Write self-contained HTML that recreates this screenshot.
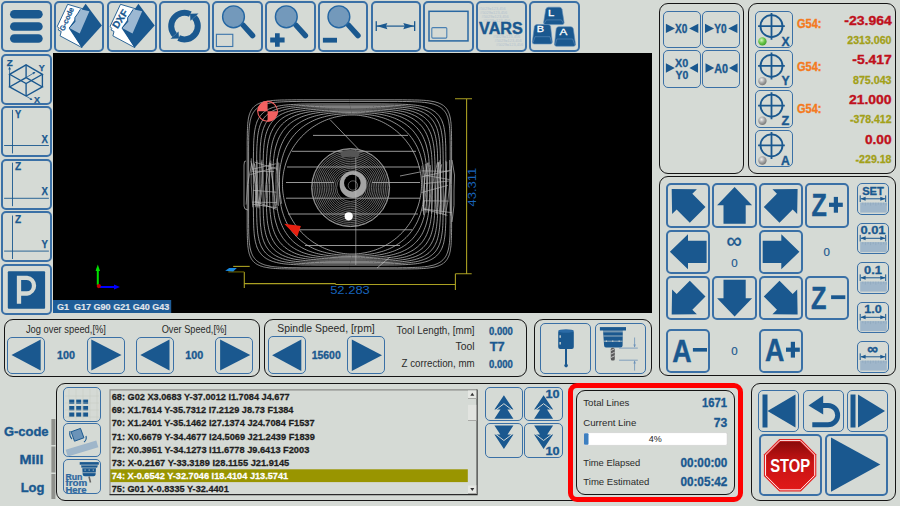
<!DOCTYPE html>
<html><head><meta charset="utf-8">
<style>
html,body{margin:0;padding:0;}
body{width:900px;height:506px;overflow:hidden;background:#d5dad5;position:relative;font-family:"Liberation Sans",sans-serif;}
.a{position:absolute;box-sizing:border-box;}
.b{position:absolute;box-sizing:border-box;border:2px solid #3a70a6;border-radius:5px;}
.p{position:absolute;box-sizing:border-box;border:1.7px solid #151515;border-radius:9px;}
.t{position:absolute;white-space:nowrap;line-height:1;}
svg{position:absolute;overflow:visible;}
</style></head><body>
<!-- top toolbar -->
<div class="b" style="left:0.9px;top:0.9px;width:50.7px;height:50.7px"></div>
<div class="b" style="left:53.7px;top:0.9px;width:50.7px;height:50.7px"></div>
<div class="b" style="left:106.5px;top:0.9px;width:50.7px;height:50.7px"></div>
<div class="b" style="left:159.3px;top:0.9px;width:50.7px;height:50.7px"></div>
<div class="b" style="left:212.1px;top:0.9px;width:50.7px;height:50.7px"></div>
<div class="b" style="left:264.9px;top:0.9px;width:50.7px;height:50.7px"></div>
<div class="b" style="left:317.7px;top:0.9px;width:50.7px;height:50.7px"></div>
<div class="b" style="left:370.5px;top:0.9px;width:50.7px;height:50.7px"></div>
<div class="b" style="left:423.3px;top:0.9px;width:50.7px;height:50.7px"></div>
<div class="b" style="left:476.1px;top:0.9px;width:50.7px;height:50.7px"></div>
<div class="b" style="left:528.9px;top:0.9px;width:50.7px;height:50.7px"></div>
<!-- left column -->
<div class="b" style="left:0.9px;top:53.5px;width:50.7px;height:51.2px"></div>
<div class="b" style="left:0.9px;top:106px;width:50.7px;height:51.2px"></div>
<div class="b" style="left:0.9px;top:158.5px;width:50.7px;height:51.2px"></div>
<div class="b" style="left:0.9px;top:211px;width:50.7px;height:51.2px"></div>
<div class="b" style="left:0.9px;top:263.6px;width:50.7px;height:51.2px"></div>
<!-- canvas -->
<div class="a" style="left:53px;top:53px;width:599.2px;height:259.8px;background:#000;overflow:hidden" id="cv"></div>

<!-- top right panels -->
<div class="p" style="left:658.7px;top:3.3px;width:85.6px;height:170.6px"></div>
<div class="p" style="left:748.2px;top:3.3px;width:147.8px;height:170.6px"></div>
<div class="b" style="left:663.2px;top:10.8px;width:37.5px;height:37.5px;border-width:1.5px"></div>
<div class="b" style="left:702.3px;top:10.8px;width:37.5px;height:37.5px;border-width:1.5px"></div>
<div class="b" style="left:663.2px;top:50.1px;width:37.5px;height:37.5px;border-width:1.5px"></div>
<div class="b" style="left:702.3px;top:50.1px;width:37.5px;height:37.5px;border-width:1.5px"></div>
<div class="b" style="left:755.1px;top:10.7px;width:37.6px;height:37.7px;border-width:1.5px"></div>
<div class="b" style="left:755.1px;top:50.4px;width:37.6px;height:37.7px;border-width:1.5px"></div>
<div class="b" style="left:755.1px;top:90.1px;width:37.6px;height:37.7px;border-width:1.5px"></div>
<div class="b" style="left:755.1px;top:129.8px;width:37.6px;height:37.7px;border-width:1.5px"></div>

<!-- jog panel -->
<div class="p" style="left:659px;top:176.3px;width:236.9px;height:200.2px"></div>
<div class="b" style="left:665.9px;top:183.3px;width:44.5px;height:44.3px"></div>
<div class="b" style="left:712.2px;top:183.3px;width:44.5px;height:44.3px"></div>
<div class="b" style="left:758.5px;top:183.3px;width:44.5px;height:44.3px"></div>
<div class="b" style="left:804.8px;top:183.3px;width:44.5px;height:44.3px"></div>
<div class="b" style="left:665.9px;top:229.8px;width:44.5px;height:44.3px"></div>
<div class="b" style="left:758.5px;top:229.8px;width:44.5px;height:44.3px"></div>
<div class="b" style="left:665.9px;top:276.2px;width:44.5px;height:44.3px"></div>
<div class="b" style="left:712.2px;top:276.2px;width:44.5px;height:44.3px"></div>
<div class="b" style="left:758.5px;top:276.2px;width:44.5px;height:44.3px"></div>
<div class="b" style="left:804.8px;top:276.2px;width:44.5px;height:44.3px"></div>
<div class="b" style="left:665.9px;top:328.6px;width:44.5px;height:44.3px"></div>
<div class="b" style="left:758.5px;top:328.6px;width:44.5px;height:44.3px"></div>
<div class="b" style="left:857.2px;top:183.3px;width:31.5px;height:31.3px;border-width:1.5px"></div>
<div class="b" style="left:857.2px;top:222.8px;width:31.5px;height:31.3px;border-width:1.5px"></div>
<div class="b" style="left:857.2px;top:262.3px;width:31.5px;height:31.3px;border-width:1.5px"></div>
<div class="b" style="left:857.2px;top:301.8px;width:31.5px;height:31.3px;border-width:1.5px"></div>
<div class="b" style="left:857.2px;top:341.3px;width:31.5px;height:31.3px;border-width:1.5px"></div>

<!-- bottom mid panels -->
<div class="p" style="left:3.5px;top:318.9px;width:256px;height:58.5px"></div>
<div class="b" style="left:7.2px;top:336.6px;width:38px;height:37px;border-width:1.5px"></div>
<div class="b" style="left:86.7px;top:336.6px;width:38px;height:37px;border-width:1.5px"></div>
<div class="b" style="left:136px;top:336.6px;width:38px;height:37px;border-width:1.5px"></div>
<div class="b" style="left:215.3px;top:336.6px;width:38px;height:37px;border-width:1.5px"></div>
<div class="p" style="left:264.2px;top:318.9px;width:262.4px;height:58.5px"></div>
<div class="b" style="left:267.8px;top:336.4px;width:38px;height:37.6px;border-width:1.5px"></div>
<div class="b" style="left:346.7px;top:336.4px;width:38px;height:37.6px;border-width:1.5px"></div>
<div class="p" style="left:534.2px;top:318.9px;width:118px;height:58.4px"></div>
<div class="b" style="left:540px;top:323.4px;width:50.6px;height:50.6px;border-width:1.5px"></div>
<div class="b" style="left:595px;top:323.4px;width:50.9px;height:50.6px;border-width:1.5px"></div>

<!-- bottom row -->
<div class="p" style="left:56.4px;top:382.6px;width:684px;height:118.8px"></div>
<div class="b" style="left:63.4px;top:387.2px;width:37.5px;height:34.4px;border-width:1.5px"></div>
<div class="b" style="left:63.4px;top:423.4px;width:37.5px;height:34px;border-width:1.5px"></div>
<div class="b" style="left:63.4px;top:459px;width:37.5px;height:35px;border-width:1.5px"></div>
<div class="b" style="left:485px;top:387.4px;width:37.8px;height:33.6px;border-width:1.5px"></div>
<div class="b" style="left:524.3px;top:387.4px;width:38.5px;height:33.6px;border-width:1.5px"></div>
<div class="b" style="left:485px;top:423px;width:37.8px;height:34.7px;border-width:1.5px"></div>
<div class="b" style="left:524.3px;top:423px;width:38.5px;height:34.7px;border-width:1.5px"></div>

<div class="p" style="left:576.2px;top:389.9px;width:158.9px;height:105px;border-width:1.8px"></div>
<div class="a" style="left:568.1px;top:383px;width:174.6px;height:119.4px;border:5px solid #ff0000;border-radius:9px"></div>

<div class="p" style="left:751.3px;top:383px;width:144.7px;height:118.1px"></div>
<div class="b" style="left:758.1px;top:390.1px;width:41.3px;height:41.5px;border-width:1.5px"></div>
<div class="b" style="left:803.2px;top:390.1px;width:40.4px;height:41.5px;border-width:1.5px"></div>
<div class="b" style="left:846.6px;top:390.1px;width:41.3px;height:41.5px;border-width:1.5px"></div>
<div class="b" style="left:758.9px;top:434.1px;width:62.7px;height:62.2px"></div>
<div class="b" style="left:825.4px;top:434.1px;width:62.5px;height:62.2px"></div>


<svg width="900" height="506" style="left:0;top:0" viewBox="0 0 900 506" font-family="Liberation Sans, sans-serif">
<defs><clipPath id="cvc"><rect x="53" y="53" width="599.5" height="260"/></clipPath>
<path id="arr" d="M0,-18.4 L17.5,-0.3 L11.1,-0.3 L11.1,18.3 L-11.1,18.3 L-11.1,-0.3 L-17.5,-0.3Z"/>
<radialGradient id="led" cx="0.4" cy="0.35" r="0.7"><stop offset="0" stop-color="#d8f5c0"/><stop offset="0.5" stop-color="#6cc84a"/><stop offset="1" stop-color="#3a9a2a"/></radialGradient>
<radialGradient id="ledg" cx="0.4" cy="0.35" r="0.7"><stop offset="0" stop-color="#f0f0f0"/><stop offset="0.5" stop-color="#a8a8a8"/><stop offset="1" stop-color="#707070"/></radialGradient>
<linearGradient id="stopg" x1="0" y1="0" x2="0" y2="1"><stop offset="0" stop-color="#8a0a0a"/><stop offset="0.45" stop-color="#c81414"/><stop offset="1" stop-color="#e01818"/></linearGradient>
</defs>
<g clip-path="url(#cvc)"><!-- CANVAS START -->
<g fill="none" stroke="#bdbdbd" stroke-width="0.75"><path d="M451.6,184.4 L451.6,222.1 L451.6,228.3 L451.5,232.5 L451.5,235.6 L451.4,238.2 L451.3,240.4 L451.2,242.4 L451.1,244.1 L451.0,245.6 L450.8,247.1 L450.6,248.4 L450.5,249.6 L450.3,250.7 L450.1,251.7 L449.8,252.7 L449.6,253.7 L449.3,254.6 L449.0,255.4 L448.7,256.2 L448.4,256.9 L448.0,257.6 L447.7,258.3 L447.3,259.0 L446.9,259.6 L446.5,260.2 L446.0,260.7 L445.6,261.3 L445.1,261.8 L444.6,262.3 L444.0,262.7 L443.5,263.2 L442.9,263.6 L442.3,264.0 L441.6,264.4 L440.9,264.8 L440.2,265.1 L439.5,265.4 L438.7,265.8 L437.9,266.1 L437.0,266.3 L436.1,266.6 L435.2,266.9 L434.1,267.1 L433.1,267.3 L432.0,267.5 L430.8,267.7 L429.5,267.9 L428.1,268.1 L426.7,268.2 L425.1,268.4 L423.4,268.5 L421.5,268.6 L419.4,268.7 L417.1,268.8 L414.4,268.8 L411.3,268.9 L407.5,268.9 L402.5,269.0 L394.9,269.0 L349.4,269.0 L303.9,269.0 L296.3,269.0 L291.3,268.9 L287.5,268.9 L284.4,268.8 L281.7,268.8 L279.4,268.7 L277.3,268.6 L275.4,268.5 L273.7,268.4 L272.1,268.2 L270.7,268.1 L269.3,267.9 L268.0,267.7 L266.8,267.5 L265.7,267.3 L264.7,267.1 L263.6,266.9 L262.7,266.6 L261.8,266.3 L260.9,266.1 L260.1,265.8 L259.3,265.4 L258.6,265.1 L257.9,264.8 L257.2,264.4 L256.5,264.0 L255.9,263.6 L255.3,263.2 L254.8,262.7 L254.2,262.3 L253.7,261.8 L253.2,261.3 L252.8,260.7 L252.3,260.2 L251.9,259.6 L251.5,259.0 L251.1,258.3 L250.8,257.6 L250.4,256.9 L250.1,256.2 L249.8,255.4 L249.5,254.6 L249.2,253.7 L249.0,252.7 L248.7,251.7 L248.5,250.7 L248.3,249.6 L248.2,248.4 L248.0,247.1 L247.8,245.6 L247.7,244.1 L247.6,242.4 L247.5,240.4 L247.4,238.2 L247.3,235.6 L247.3,232.5 L247.2,228.3 L247.2,222.1 L247.2,184.4 L247.2,146.7 L247.2,140.5 L247.3,136.3 L247.3,133.2 L247.4,130.6 L247.5,128.4 L247.6,126.4 L247.7,124.7 L247.8,123.2 L248.0,121.7 L248.2,120.4 L248.3,119.2 L248.5,118.1 L248.7,117.1 L249.0,116.1 L249.2,115.1 L249.5,114.2 L249.8,113.4 L250.1,112.6 L250.4,111.9 L250.8,111.2 L251.1,110.5 L251.5,109.8 L251.9,109.2 L252.3,108.6 L252.8,108.1 L253.2,107.5 L253.7,107.0 L254.2,106.5 L254.8,106.1 L255.3,105.6 L255.9,105.2 L256.5,104.8 L257.2,104.4 L257.9,104.0 L258.6,103.7 L259.3,103.4 L260.1,103.0 L260.9,102.7 L261.8,102.5 L262.7,102.2 L263.6,101.9 L264.7,101.7 L265.7,101.5 L266.8,101.3 L268.0,101.1 L269.3,100.9 L270.7,100.7 L272.1,100.6 L273.7,100.4 L275.4,100.3 L277.3,100.2 L279.4,100.1 L281.7,100.0 L284.4,100.0 L287.5,99.9 L291.3,99.9 L296.3,99.8 L303.9,99.8 L349.4,99.8 L394.9,99.8 L402.5,99.8 L407.5,99.9 L411.3,99.9 L414.4,100.0 L417.1,100.0 L419.4,100.1 L421.5,100.2 L423.4,100.3 L425.1,100.4 L426.7,100.6 L428.1,100.7 L429.5,100.9 L430.8,101.1 L432.0,101.3 L433.1,101.5 L434.1,101.7 L435.2,101.9 L436.1,102.2 L437.0,102.5 L437.9,102.7 L438.7,103.0 L439.5,103.4 L440.2,103.7 L440.9,104.0 L441.6,104.4 L442.3,104.8 L442.9,105.2 L443.5,105.6 L444.0,106.1 L444.6,106.5 L445.1,107.0 L445.6,107.5 L446.0,108.1 L446.5,108.6 L446.9,109.2 L447.3,109.8 L447.7,110.5 L448.0,111.2 L448.4,111.9 L448.7,112.6 L449.0,113.4 L449.3,114.2 L449.6,115.1 L449.8,116.1 L450.1,117.1 L450.3,118.1 L450.5,119.2 L450.6,120.4 L450.8,121.7 L451.0,123.2 L451.1,124.7 L451.2,126.4 L451.3,128.4 L451.4,130.6 L451.5,133.2 L451.5,136.3 L451.6,140.5 L451.6,146.7Z"/><path d="M450.2,184.6 L450.2,218.1 L450.2,224.4 L450.1,228.6 L450.1,231.9 L450.0,234.6 L449.9,236.9 L449.8,239.0 L449.6,240.8 L449.5,242.4 L449.3,243.9 L449.1,245.3 L448.9,246.6 L448.7,247.8 L448.5,249.0 L448.2,250.0 L447.9,251.0 L447.7,252.0 L447.3,252.9 L447.0,253.7 L446.6,254.6 L446.3,255.3 L445.9,256.1 L445.4,256.8 L445.0,257.4 L444.5,258.1 L444.0,258.7 L443.5,259.3 L443.0,259.8 L442.4,260.4 L441.8,260.9 L441.2,261.4 L440.6,261.8 L439.9,262.3 L439.2,262.7 L438.4,263.1 L437.7,263.5 L436.8,263.9 L436.0,264.2 L435.1,264.5 L434.2,264.9 L433.2,265.2 L432.1,265.4 L431.1,265.7 L429.9,265.9 L428.7,266.2 L427.4,266.4 L426.0,266.6 L424.6,266.8 L423.0,266.9 L421.3,267.1 L419.5,267.2 L417.5,267.3 L415.3,267.4 L412.8,267.5 L410.0,267.6 L406.7,267.7 L402.7,267.7 L397.6,267.8 L389.9,267.8 L349.4,267.8 L308.9,267.8 L301.2,267.8 L296.1,267.7 L292.1,267.7 L288.8,267.6 L286.0,267.5 L283.5,267.4 L281.3,267.3 L279.3,267.2 L277.5,267.1 L275.8,266.9 L274.2,266.8 L272.8,266.6 L271.4,266.4 L270.1,266.2 L268.9,265.9 L267.7,265.7 L266.7,265.4 L265.6,265.2 L264.6,264.9 L263.7,264.5 L262.8,264.2 L262.0,263.9 L261.1,263.5 L260.4,263.1 L259.6,262.7 L258.9,262.3 L258.2,261.8 L257.6,261.4 L257.0,260.9 L256.4,260.4 L255.8,259.8 L255.3,259.3 L254.8,258.7 L254.3,258.1 L253.8,257.4 L253.4,256.8 L252.9,256.1 L252.5,255.3 L252.2,254.6 L251.8,253.7 L251.5,252.9 L251.1,252.0 L250.9,251.0 L250.6,250.0 L250.3,249.0 L250.1,247.8 L249.9,246.6 L249.7,245.3 L249.5,243.9 L249.3,242.4 L249.2,240.8 L249.0,239.0 L248.9,236.9 L248.8,234.6 L248.7,231.9 L248.7,228.6 L248.6,224.4 L248.6,218.1 L248.6,184.6 L248.6,151.1 L248.6,144.8 L248.7,140.6 L248.7,137.3 L248.8,134.6 L248.9,132.3 L249.0,130.2 L249.2,128.4 L249.3,126.8 L249.5,125.3 L249.7,123.9 L249.9,122.6 L250.1,121.4 L250.3,120.2 L250.6,119.2 L250.9,118.2 L251.1,117.2 L251.5,116.3 L251.8,115.5 L252.2,114.6 L252.5,113.9 L252.9,113.1 L253.4,112.4 L253.8,111.8 L254.3,111.1 L254.8,110.5 L255.3,109.9 L255.8,109.4 L256.4,108.8 L257.0,108.3 L257.6,107.8 L258.2,107.4 L258.9,106.9 L259.6,106.5 L260.4,106.1 L261.1,105.7 L262.0,105.3 L262.8,105.0 L263.7,104.7 L264.6,104.3 L265.6,104.0 L266.7,103.8 L267.7,103.5 L268.9,103.3 L270.1,103.0 L271.4,102.8 L272.8,102.6 L274.2,102.4 L275.8,102.3 L277.5,102.1 L279.3,102.0 L281.3,101.9 L283.5,101.8 L286.0,101.7 L288.8,101.6 L292.1,101.5 L296.1,101.5 L301.2,101.4 L308.9,101.4 L349.4,101.4 L389.9,101.4 L397.6,101.4 L402.7,101.5 L406.7,101.5 L410.0,101.6 L412.8,101.7 L415.3,101.8 L417.5,101.9 L419.5,102.0 L421.3,102.1 L423.0,102.3 L424.6,102.4 L426.0,102.6 L427.4,102.8 L428.7,103.0 L429.9,103.3 L431.1,103.5 L432.1,103.8 L433.2,104.0 L434.2,104.3 L435.1,104.7 L436.0,105.0 L436.8,105.3 L437.7,105.7 L438.4,106.1 L439.2,106.5 L439.9,106.9 L440.6,107.4 L441.2,107.8 L441.8,108.3 L442.4,108.8 L443.0,109.4 L443.5,109.9 L444.0,110.5 L444.5,111.1 L445.0,111.8 L445.4,112.4 L445.9,113.1 L446.3,113.9 L446.6,114.6 L447.0,115.5 L447.3,116.3 L447.7,117.2 L447.9,118.2 L448.2,119.2 L448.5,120.2 L448.7,121.4 L448.9,122.6 L449.1,123.9 L449.3,125.3 L449.5,126.8 L449.6,128.4 L449.8,130.2 L449.9,132.3 L450.0,134.6 L450.1,137.3 L450.1,140.6 L450.2,144.8 L450.2,151.1Z"/><path d="M445.9,184.5 L445.9,210.9 L445.8,217.5 L445.8,222.1 L445.6,225.8 L445.5,228.8 L445.3,231.5 L445.1,233.8 L444.9,236.0 L444.6,237.9 L444.3,239.7 L444.0,241.3 L443.7,242.9 L443.3,244.3 L442.8,245.7 L442.4,247.0 L441.9,248.2 L441.4,249.3 L440.8,250.4 L440.2,251.4 L439.5,252.4 L438.9,253.3 L438.1,254.2 L437.4,255.0 L436.6,255.8 L435.7,256.6 L434.8,257.3 L433.9,257.9 L432.9,258.6 L431.8,259.2 L430.7,259.8 L429.6,260.3 L428.4,260.8 L427.1,261.3 L425.7,261.7 L424.3,262.1 L422.7,262.5 L421.1,262.9 L419.4,263.2 L417.6,263.5 L415.6,263.8 L413.4,264.0 L411.1,264.2 L408.6,264.4 L405.8,264.6 L402.6,264.7 L398.9,264.9 L394.6,265.0 L389.1,265.0 L381.2,265.1 L349.7,265.1 L318.1,265.1 L310.2,265.0 L304.7,265.0 L300.4,264.9 L296.7,264.7 L293.6,264.6 L290.7,264.4 L288.2,264.2 L285.9,264.0 L283.7,263.8 L281.8,263.5 L279.9,263.2 L278.2,262.9 L276.6,262.5 L275.0,262.1 L273.6,261.7 L272.2,261.3 L271.0,260.8 L269.7,260.3 L268.6,259.8 L267.5,259.2 L266.4,258.6 L265.4,257.9 L264.5,257.3 L263.6,256.6 L262.7,255.8 L261.9,255.0 L261.2,254.2 L260.5,253.3 L259.8,252.4 L259.1,251.4 L258.5,250.4 L258.0,249.3 L257.4,248.2 L256.9,247.0 L256.5,245.7 L256.1,244.3 L255.7,242.9 L255.3,241.3 L255.0,239.7 L254.7,237.9 L254.4,236.0 L254.2,233.8 L254.0,231.5 L253.8,228.8 L253.7,225.8 L253.6,222.1 L253.5,217.5 L253.4,210.9 L253.4,184.5 L253.4,158.1 L253.5,151.5 L253.6,146.9 L253.7,143.2 L253.8,140.2 L254.0,137.5 L254.2,135.2 L254.4,133.0 L254.7,131.1 L255.0,129.3 L255.3,127.7 L255.7,126.1 L256.1,124.7 L256.5,123.3 L256.9,122.0 L257.4,120.8 L258.0,119.7 L258.5,118.6 L259.1,117.6 L259.8,116.6 L260.5,115.7 L261.2,114.8 L261.9,114.0 L262.7,113.2 L263.6,112.4 L264.5,111.7 L265.4,111.1 L266.4,110.4 L267.5,109.8 L268.6,109.2 L269.7,108.7 L271.0,108.2 L272.2,107.7 L273.6,107.3 L275.0,106.9 L276.6,106.5 L278.2,106.1 L279.9,105.8 L281.8,105.5 L283.7,105.2 L285.9,105.0 L288.2,104.8 L290.7,104.6 L293.6,104.4 L296.7,104.3 L300.4,104.1 L304.7,104.0 L310.2,104.0 L318.1,103.9 L349.7,103.9 L381.2,103.9 L389.1,104.0 L394.6,104.0 L398.9,104.1 L402.6,104.3 L405.8,104.4 L408.6,104.6 L411.1,104.8 L413.4,105.0 L415.6,105.2 L417.6,105.5 L419.4,105.8 L421.1,106.1 L422.7,106.5 L424.3,106.9 L425.7,107.3 L427.1,107.7 L428.4,108.2 L429.6,108.7 L430.7,109.2 L431.8,109.8 L432.9,110.4 L433.9,111.1 L434.8,111.7 L435.7,112.4 L436.6,113.2 L437.4,114.0 L438.1,114.8 L438.9,115.7 L439.5,116.6 L440.2,117.6 L440.8,118.6 L441.4,119.7 L441.9,120.8 L442.4,122.0 L442.8,123.3 L443.3,124.7 L443.7,126.1 L444.0,127.7 L444.3,129.3 L444.6,131.1 L444.9,133.0 L445.1,135.2 L445.3,137.5 L445.5,140.2 L445.6,143.2 L445.8,146.9 L445.8,151.5 L445.9,158.1Z"/><path d="M443.2,184.5 L443.2,207.7 L443.1,214.1 L443.0,218.7 L442.9,222.4 L442.8,225.5 L442.6,228.2 L442.4,230.7 L442.1,232.9 L441.8,234.9 L441.5,236.7 L441.2,238.5 L440.8,240.1 L440.4,241.6 L439.9,243.1 L439.4,244.4 L438.9,245.7 L438.3,246.9 L437.7,248.0 L437.1,249.1 L436.4,250.2 L435.7,251.2 L434.9,252.1 L434.1,253.0 L433.3,253.8 L432.4,254.6 L431.4,255.4 L430.4,256.1 L429.4,256.8 L428.3,257.5 L427.1,258.1 L425.9,258.7 L424.6,259.2 L423.3,259.7 L421.8,260.2 L420.3,260.6 L418.7,261.1 L417.1,261.5 L415.3,261.8 L413.4,262.1 L411.3,262.4 L409.1,262.7 L406.8,262.9 L404.2,263.2 L401.3,263.3 L398.1,263.5 L394.5,263.6 L390.1,263.7 L384.7,263.8 L377.1,263.8 L349.9,263.8 L322.7,263.8 L315.1,263.8 L309.7,263.7 L305.4,263.6 L301.7,263.5 L298.5,263.3 L295.7,263.2 L293.1,262.9 L290.7,262.7 L288.5,262.4 L286.5,262.1 L284.6,261.8 L282.8,261.5 L281.1,261.1 L279.5,260.6 L278.0,260.2 L276.6,259.7 L275.2,259.2 L273.9,258.7 L272.7,258.1 L271.6,257.5 L270.5,256.8 L269.4,256.1 L268.4,255.4 L267.5,254.6 L266.6,253.8 L265.7,253.0 L264.9,252.1 L264.2,251.2 L263.4,250.2 L262.8,249.1 L262.1,248.0 L261.5,246.9 L260.9,245.7 L260.4,244.4 L259.9,243.1 L259.5,241.6 L259.0,240.1 L258.7,238.5 L258.3,236.7 L258.0,234.9 L257.7,232.9 L257.5,230.7 L257.3,228.2 L257.1,225.5 L256.9,222.4 L256.8,218.7 L256.7,214.1 L256.7,207.7 L256.7,184.5 L256.7,161.3 L256.7,154.9 L256.8,150.3 L256.9,146.6 L257.1,143.5 L257.3,140.8 L257.5,138.3 L257.7,136.1 L258.0,134.1 L258.3,132.3 L258.7,130.5 L259.0,128.9 L259.5,127.4 L259.9,125.9 L260.4,124.6 L260.9,123.3 L261.5,122.1 L262.1,121.0 L262.8,119.9 L263.4,118.8 L264.2,117.8 L264.9,116.9 L265.7,116.0 L266.6,115.2 L267.5,114.4 L268.4,113.6 L269.4,112.9 L270.5,112.2 L271.6,111.5 L272.7,110.9 L273.9,110.3 L275.2,109.8 L276.6,109.3 L278.0,108.8 L279.5,108.4 L281.1,107.9 L282.8,107.5 L284.6,107.2 L286.5,106.9 L288.5,106.6 L290.7,106.3 L293.1,106.1 L295.7,105.8 L298.5,105.7 L301.7,105.5 L305.4,105.4 L309.7,105.3 L315.1,105.2 L322.7,105.2 L349.9,105.2 L377.1,105.2 L384.7,105.2 L390.1,105.3 L394.5,105.4 L398.1,105.5 L401.3,105.7 L404.2,105.8 L406.8,106.1 L409.1,106.3 L411.3,106.6 L413.4,106.9 L415.3,107.2 L417.1,107.5 L418.7,107.9 L420.3,108.4 L421.8,108.8 L423.3,109.3 L424.6,109.8 L425.9,110.3 L427.1,110.9 L428.3,111.5 L429.4,112.2 L430.4,112.9 L431.4,113.6 L432.4,114.4 L433.3,115.2 L434.1,116.0 L434.9,116.9 L435.7,117.8 L436.4,118.8 L437.1,119.9 L437.7,121.0 L438.3,122.1 L438.9,123.3 L439.4,124.6 L439.9,125.9 L440.4,127.4 L440.8,128.9 L441.2,130.5 L441.5,132.3 L441.8,134.1 L442.1,136.1 L442.4,138.3 L442.6,140.8 L442.8,143.5 L442.9,146.6 L443.0,150.3 L443.1,154.9 L443.2,161.3Z"/><path d="M440.5,184.5 L440.5,204.6 L440.4,210.8 L440.3,215.4 L440.2,219.0 L440.0,222.2 L439.8,225.0 L439.6,227.4 L439.3,229.7 L439.0,231.8 L438.7,233.7 L438.3,235.6 L437.9,237.3 L437.5,238.8 L437.0,240.4 L436.5,241.8 L435.9,243.1 L435.3,244.4 L434.7,245.6 L434.0,246.8 L433.3,247.9 L432.5,248.9 L431.7,249.9 L430.8,250.9 L429.9,251.8 L429.0,252.7 L428.0,253.5 L426.9,254.3 L425.8,255.0 L424.7,255.7 L423.5,256.4 L422.2,257.0 L420.8,257.6 L419.4,258.1 L418.0,258.7 L416.4,259.1 L414.7,259.6 L413.0,260.0 L411.2,260.4 L409.2,260.8 L407.1,261.1 L404.9,261.4 L402.4,261.6 L399.8,261.9 L396.9,262.1 L393.7,262.2 L390.1,262.4 L385.9,262.5 L380.6,262.5 L373.4,262.6 L350.2,262.6 L327.0,262.6 L319.7,262.5 L314.5,262.5 L310.2,262.4 L306.6,262.2 L303.4,262.1 L300.5,261.9 L297.9,261.6 L295.5,261.4 L293.3,261.1 L291.2,260.8 L289.2,260.4 L287.4,260.0 L285.6,259.6 L284.0,259.1 L282.4,258.7 L280.9,258.1 L279.5,257.6 L278.2,257.0 L276.9,256.4 L275.7,255.7 L274.5,255.0 L273.4,254.3 L272.4,253.5 L271.4,252.7 L270.4,251.8 L269.5,250.9 L268.7,249.9 L267.9,248.9 L267.1,247.9 L266.4,246.8 L265.7,245.6 L265.1,244.4 L264.5,243.1 L263.9,241.8 L263.4,240.4 L262.9,238.8 L262.4,237.3 L262.0,235.6 L261.7,233.7 L261.3,231.8 L261.0,229.7 L260.8,227.4 L260.5,225.0 L260.3,222.2 L260.2,219.0 L260.0,215.4 L260.0,210.8 L259.9,204.6 L259.9,184.5 L259.9,164.4 L260.0,158.2 L260.0,153.6 L260.2,150.0 L260.3,146.8 L260.5,144.0 L260.8,141.6 L261.0,139.3 L261.3,137.2 L261.7,135.3 L262.0,133.4 L262.4,131.7 L262.9,130.2 L263.4,128.6 L263.9,127.2 L264.5,125.9 L265.1,124.6 L265.7,123.4 L266.4,122.2 L267.1,121.1 L267.9,120.1 L268.7,119.1 L269.5,118.1 L270.4,117.2 L271.4,116.3 L272.4,115.5 L273.4,114.7 L274.5,114.0 L275.7,113.3 L276.9,112.6 L278.2,112.0 L279.5,111.4 L280.9,110.9 L282.4,110.3 L284.0,109.9 L285.6,109.4 L287.4,109.0 L289.2,108.6 L291.2,108.2 L293.3,107.9 L295.5,107.6 L297.9,107.4 L300.5,107.1 L303.4,106.9 L306.6,106.8 L310.2,106.6 L314.5,106.5 L319.7,106.5 L327.0,106.4 L350.2,106.4 L373.4,106.4 L380.6,106.5 L385.9,106.5 L390.1,106.6 L393.7,106.8 L396.9,106.9 L399.8,107.1 L402.4,107.4 L404.9,107.6 L407.1,107.9 L409.2,108.2 L411.2,108.6 L413.0,109.0 L414.7,109.4 L416.4,109.9 L418.0,110.3 L419.4,110.9 L420.8,111.4 L422.2,112.0 L423.5,112.6 L424.7,113.3 L425.8,114.0 L426.9,114.7 L428.0,115.5 L429.0,116.3 L429.9,117.2 L430.8,118.1 L431.7,119.1 L432.5,120.1 L433.3,121.1 L434.0,122.2 L434.7,123.4 L435.3,124.6 L435.9,125.9 L436.5,127.2 L437.0,128.6 L437.5,130.2 L437.9,131.7 L438.3,133.4 L438.7,135.3 L439.0,137.2 L439.3,139.3 L439.6,141.6 L439.8,144.0 L440.0,146.8 L440.2,150.0 L440.3,153.6 L440.4,158.2 L440.5,164.4Z"/><path d="M437.8,184.5 L437.7,201.6 L437.7,207.6 L437.6,212.0 L437.5,215.7 L437.3,218.8 L437.1,221.6 L436.8,224.1 L436.6,226.5 L436.2,228.6 L435.9,230.6 L435.5,232.5 L435.0,234.3 L434.6,235.9 L434.0,237.5 L433.5,239.0 L432.9,240.5 L432.2,241.8 L431.6,243.1 L430.8,244.3 L430.1,245.5 L429.3,246.6 L428.4,247.7 L427.5,248.7 L426.5,249.7 L425.5,250.6 L424.5,251.5 L423.4,252.3 L422.2,253.1 L421.0,253.9 L419.7,254.6 L418.4,255.3 L417.0,255.9 L415.5,256.5 L414.0,257.1 L412.4,257.6 L410.7,258.1 L408.9,258.6 L407.0,259.0 L405.0,259.4 L402.8,259.7 L400.6,260.0 L398.1,260.3 L395.5,260.6 L392.6,260.8 L389.4,261.0 L385.8,261.1 L381.7,261.2 L376.6,261.3 L369.8,261.4 L350.4,261.4 L331.1,261.4 L324.2,261.3 L319.2,261.2 L315.1,261.1 L311.5,261.0 L308.3,260.8 L305.4,260.6 L302.8,260.3 L300.3,260.0 L298.0,259.7 L295.9,259.4 L293.9,259.0 L292.0,258.6 L290.2,258.1 L288.5,257.6 L286.9,257.1 L285.3,256.5 L283.9,255.9 L282.5,255.3 L281.1,254.6 L279.9,253.9 L278.7,253.1 L277.5,252.3 L276.4,251.5 L275.3,250.6 L274.3,249.7 L273.4,248.7 L272.5,247.7 L271.6,246.6 L270.8,245.5 L270.0,244.3 L269.3,243.1 L268.6,241.8 L268.0,240.5 L267.4,239.0 L266.8,237.5 L266.3,235.9 L265.8,234.3 L265.4,232.5 L265.0,230.6 L264.6,228.6 L264.3,226.5 L264.0,224.1 L263.8,221.6 L263.6,218.8 L263.4,215.7 L263.3,212.0 L263.2,207.6 L263.1,201.6 L263.1,184.5 L263.1,167.4 L263.2,161.4 L263.3,157.0 L263.4,153.3 L263.6,150.2 L263.8,147.4 L264.0,144.9 L264.3,142.5 L264.6,140.4 L265.0,138.4 L265.4,136.5 L265.8,134.7 L266.3,133.1 L266.8,131.5 L267.4,130.0 L268.0,128.5 L268.6,127.2 L269.3,125.9 L270.0,124.7 L270.8,123.5 L271.6,122.4 L272.5,121.3 L273.4,120.3 L274.3,119.3 L275.3,118.4 L276.4,117.5 L277.5,116.7 L278.7,115.9 L279.9,115.1 L281.1,114.4 L282.5,113.7 L283.9,113.1 L285.3,112.5 L286.9,111.9 L288.5,111.4 L290.2,110.9 L292.0,110.4 L293.9,110.0 L295.9,109.6 L298.0,109.3 L300.3,109.0 L302.8,108.7 L305.4,108.4 L308.3,108.2 L311.5,108.0 L315.1,107.9 L319.2,107.8 L324.2,107.7 L331.1,107.6 L350.4,107.6 L369.8,107.6 L376.6,107.7 L381.7,107.8 L385.8,107.9 L389.4,108.0 L392.6,108.2 L395.5,108.4 L398.1,108.7 L400.6,109.0 L402.8,109.3 L405.0,109.6 L407.0,110.0 L408.9,110.4 L410.7,110.9 L412.4,111.4 L414.0,111.9 L415.5,112.5 L417.0,113.1 L418.4,113.7 L419.7,114.4 L421.0,115.1 L422.2,115.9 L423.4,116.7 L424.5,117.5 L425.5,118.4 L426.5,119.3 L427.5,120.3 L428.4,121.3 L429.3,122.4 L430.1,123.5 L430.8,124.7 L431.6,125.9 L432.2,127.2 L432.9,128.5 L433.5,130.0 L434.0,131.5 L434.6,133.1 L435.0,134.7 L435.5,136.5 L435.9,138.4 L436.2,140.4 L436.6,142.5 L436.8,144.9 L437.1,147.4 L437.3,150.2 L437.5,153.3 L437.6,157.0 L437.7,161.4 L437.7,167.4Z"/><path d="M435.0,184.5 L435.0,198.6 L435.0,204.3 L434.9,208.6 L434.7,212.2 L434.5,215.3 L434.3,218.1 L434.1,220.7 L433.8,223.1 L433.4,225.3 L433.0,227.3 L432.6,229.3 L432.1,231.1 L431.6,232.9 L431.1,234.5 L430.5,236.1 L429.8,237.6 L429.1,239.0 L428.4,240.4 L427.6,241.7 L426.8,243.0 L426.0,244.2 L425.0,245.3 L424.1,246.4 L423.1,247.5 L422.0,248.5 L420.9,249.4 L419.7,250.3 L418.5,251.2 L417.2,252.0 L415.9,252.8 L414.5,253.5 L413.0,254.2 L411.5,254.8 L409.9,255.5 L408.2,256.0 L406.5,256.6 L404.6,257.1 L402.7,257.5 L400.6,257.9 L398.5,258.3 L396.1,258.7 L393.7,259.0 L391.0,259.3 L388.2,259.5 L385.0,259.7 L381.5,259.9 L377.5,260.0 L372.8,260.1 L366.5,260.1 L350.7,260.1 L334.9,260.1 L328.6,260.1 L323.9,260.0 L319.9,259.9 L316.4,259.7 L313.2,259.5 L310.4,259.3 L307.7,259.0 L305.3,258.7 L302.9,258.3 L300.8,257.9 L298.7,257.5 L296.8,257.1 L294.9,256.6 L293.2,256.0 L291.5,255.5 L289.9,254.8 L288.4,254.2 L286.9,253.5 L285.5,252.8 L284.2,252.0 L282.9,251.2 L281.7,250.3 L280.5,249.4 L279.4,248.5 L278.3,247.5 L277.3,246.4 L276.4,245.3 L275.4,244.2 L274.6,243.0 L273.8,241.7 L273.0,240.4 L272.3,239.0 L271.6,237.6 L270.9,236.1 L270.3,234.5 L269.8,232.9 L269.3,231.1 L268.8,229.3 L268.4,227.3 L268.0,225.3 L267.6,223.1 L267.3,220.7 L267.1,218.1 L266.9,215.3 L266.7,212.2 L266.5,208.6 L266.4,204.3 L266.4,198.6 L266.4,184.5 L266.4,170.4 L266.4,164.7 L266.5,160.4 L266.7,156.8 L266.9,153.7 L267.1,150.9 L267.3,148.3 L267.6,145.9 L268.0,143.7 L268.4,141.7 L268.8,139.7 L269.3,137.9 L269.8,136.1 L270.3,134.5 L270.9,132.9 L271.6,131.4 L272.3,130.0 L273.0,128.6 L273.8,127.3 L274.6,126.0 L275.4,124.8 L276.4,123.7 L277.3,122.6 L278.3,121.5 L279.4,120.5 L280.5,119.6 L281.7,118.7 L282.9,117.8 L284.2,117.0 L285.5,116.2 L286.9,115.5 L288.4,114.8 L289.9,114.2 L291.5,113.5 L293.2,113.0 L294.9,112.4 L296.8,111.9 L298.7,111.5 L300.8,111.1 L302.9,110.7 L305.3,110.3 L307.7,110.0 L310.4,109.7 L313.2,109.5 L316.4,109.3 L319.9,109.1 L323.9,109.0 L328.6,108.9 L334.9,108.9 L350.7,108.8 L366.5,108.9 L372.8,108.9 L377.5,109.0 L381.5,109.1 L385.0,109.3 L388.2,109.5 L391.0,109.7 L393.7,110.0 L396.1,110.3 L398.5,110.7 L400.6,111.1 L402.7,111.5 L404.6,111.9 L406.5,112.4 L408.2,113.0 L409.9,113.5 L411.5,114.2 L413.0,114.8 L414.5,115.5 L415.9,116.2 L417.2,117.0 L418.5,117.8 L419.7,118.7 L420.9,119.6 L422.0,120.5 L423.1,121.5 L424.1,122.6 L425.0,123.7 L426.0,124.8 L426.8,126.0 L427.6,127.3 L428.4,128.6 L429.1,130.0 L429.8,131.4 L430.5,132.9 L431.1,134.5 L431.6,136.1 L432.1,137.9 L432.6,139.7 L433.0,141.7 L433.4,143.7 L433.8,145.9 L434.1,148.3 L434.3,150.9 L434.5,153.7 L434.7,156.8 L434.9,160.4 L435.0,164.7 L435.0,170.4Z"/><path d="M432.3,184.5 L432.3,195.8 L432.3,201.0 L432.1,205.1 L432.0,208.6 L431.8,211.6 L431.6,214.4 L431.3,217.0 L430.9,219.4 L430.6,221.7 L430.1,223.8 L429.7,225.8 L429.2,227.7 L428.6,229.5 L428.0,231.3 L427.4,232.9 L426.7,234.5 L426.0,236.0 L425.2,237.5 L424.4,238.9 L423.5,240.2 L422.6,241.5 L421.6,242.8 L420.6,243.9 L419.5,245.1 L418.4,246.1 L417.2,247.2 L415.9,248.1 L414.7,249.1 L413.3,250.0 L411.9,250.8 L410.4,251.6 L408.9,252.4 L407.3,253.1 L405.7,253.8 L403.9,254.4 L402.1,255.0 L400.2,255.5 L398.2,256.0 L396.1,256.5 L393.9,256.9 L391.6,257.3 L389.1,257.6 L386.5,257.9 L383.7,258.2 L380.6,258.4 L377.3,258.6 L373.5,258.7 L369.0,258.8 L363.4,258.9 L351.0,258.9 L338.6,258.9 L332.9,258.8 L328.5,258.7 L324.7,258.6 L321.3,258.4 L318.2,258.2 L315.4,257.9 L312.8,257.6 L310.3,257.3 L308.0,256.9 L305.8,256.5 L303.7,256.0 L301.7,255.5 L299.8,255.0 L298.0,254.4 L296.3,253.8 L294.6,253.1 L293.0,252.4 L291.5,251.6 L290.0,250.8 L288.6,250.0 L287.3,249.1 L286.0,248.1 L284.7,247.2 L283.6,246.1 L282.4,245.1 L281.4,243.9 L280.3,242.8 L279.4,241.5 L278.4,240.2 L277.6,238.9 L276.7,237.5 L276.0,236.0 L275.2,234.5 L274.5,232.9 L273.9,231.3 L273.3,229.5 L272.7,227.7 L272.2,225.8 L271.8,223.8 L271.4,221.7 L271.0,219.4 L270.7,217.0 L270.4,214.4 L270.1,211.6 L269.9,208.6 L269.8,205.1 L269.7,201.0 L269.6,195.8 L269.6,184.5 L269.6,173.2 L269.7,168.0 L269.8,163.9 L269.9,160.4 L270.1,157.4 L270.4,154.6 L270.7,152.0 L271.0,149.6 L271.4,147.3 L271.8,145.2 L272.2,143.2 L272.7,141.3 L273.3,139.5 L273.9,137.7 L274.5,136.1 L275.2,134.5 L276.0,133.0 L276.7,131.5 L277.6,130.1 L278.4,128.8 L279.4,127.5 L280.3,126.2 L281.4,125.1 L282.4,123.9 L283.6,122.9 L284.7,121.8 L286.0,120.9 L287.3,119.9 L288.6,119.0 L290.0,118.2 L291.5,117.4 L293.0,116.6 L294.6,115.9 L296.3,115.2 L298.0,114.6 L299.8,114.0 L301.7,113.5 L303.7,113.0 L305.8,112.5 L308.0,112.1 L310.3,111.7 L312.8,111.4 L315.4,111.1 L318.2,110.8 L321.3,110.6 L324.7,110.4 L328.5,110.3 L332.9,110.2 L338.6,110.1 L351.0,110.1 L363.4,110.1 L369.0,110.2 L373.5,110.3 L377.3,110.4 L380.6,110.6 L383.7,110.8 L386.5,111.1 L389.1,111.4 L391.6,111.7 L393.9,112.1 L396.1,112.5 L398.2,113.0 L400.2,113.5 L402.1,114.0 L403.9,114.6 L405.7,115.2 L407.3,115.9 L408.9,116.6 L410.4,117.4 L411.9,118.2 L413.3,119.0 L414.7,119.9 L415.9,120.9 L417.2,121.8 L418.4,122.9 L419.5,123.9 L420.6,125.1 L421.6,126.2 L422.6,127.5 L423.5,128.8 L424.4,130.1 L425.2,131.5 L426.0,133.0 L426.7,134.5 L427.4,136.1 L428.0,137.7 L428.6,139.5 L429.2,141.3 L429.7,143.2 L430.1,145.2 L430.6,147.3 L430.9,149.6 L431.3,152.0 L431.6,154.6 L431.8,157.4 L432.0,160.4 L432.1,163.9 L432.3,168.0 L432.3,173.2Z"/><path d="M429.6,184.5 L429.6,193.2 L429.5,197.8 L429.4,201.5 L429.2,204.8 L429.0,207.8 L428.8,210.5 L428.5,213.1 L428.1,215.5 L427.7,217.8 L427.2,220.0 L426.7,222.0 L426.2,224.0 L425.6,225.9 L424.9,227.7 L424.2,229.5 L423.5,231.1 L422.7,232.8 L421.9,234.3 L421.0,235.8 L420.0,237.2 L419.0,238.6 L418.0,239.9 L416.9,241.2 L415.7,242.4 L414.5,243.6 L413.3,244.7 L412.0,245.8 L410.6,246.8 L409.2,247.8 L407.7,248.7 L406.2,249.6 L404.6,250.4 L402.9,251.2 L401.2,252.0 L399.4,252.7 L397.5,253.3 L395.6,253.9 L393.5,254.5 L391.4,255.0 L389.2,255.5 L386.9,255.9 L384.4,256.3 L381.9,256.6 L379.1,256.9 L376.2,257.1 L373.0,257.3 L369.5,257.5 L365.4,257.6 L360.5,257.7 L351.2,257.7 L342.0,257.7 L337.0,257.6 L333.0,257.5 L329.5,257.3 L326.3,257.1 L323.3,256.9 L320.6,256.6 L318.0,256.3 L315.6,255.9 L313.2,255.5 L311.0,255.0 L308.9,254.5 L306.9,253.9 L304.9,253.3 L303.1,252.7 L301.3,252.0 L299.5,251.2 L297.9,250.4 L296.3,249.6 L294.7,248.7 L293.3,247.8 L291.8,246.8 L290.5,245.8 L289.2,244.7 L287.9,243.6 L286.7,242.4 L285.6,241.2 L284.5,239.9 L283.4,238.6 L282.4,237.2 L281.5,235.8 L280.6,234.3 L279.7,232.8 L278.9,231.1 L278.2,229.5 L277.5,227.7 L276.9,225.9 L276.3,224.0 L275.7,222.0 L275.2,220.0 L274.7,217.8 L274.3,215.5 L274.0,213.1 L273.7,210.5 L273.4,207.8 L273.2,204.8 L273.0,201.5 L272.9,197.8 L272.8,193.2 L272.8,184.5 L272.8,175.8 L272.9,171.2 L273.0,167.5 L273.2,164.2 L273.4,161.2 L273.7,158.5 L274.0,155.9 L274.3,153.5 L274.7,151.2 L275.2,149.0 L275.7,147.0 L276.3,145.0 L276.9,143.1 L277.5,141.3 L278.2,139.5 L278.9,137.9 L279.7,136.2 L280.6,134.7 L281.5,133.2 L282.4,131.8 L283.4,130.4 L284.5,129.1 L285.6,127.8 L286.7,126.6 L287.9,125.4 L289.2,124.3 L290.5,123.2 L291.8,122.2 L293.3,121.2 L294.7,120.3 L296.3,119.4 L297.9,118.6 L299.5,117.8 L301.3,117.0 L303.1,116.3 L304.9,115.7 L306.9,115.1 L308.9,114.5 L311.0,114.0 L313.2,113.5 L315.6,113.1 L318.0,112.7 L320.6,112.4 L323.3,112.1 L326.3,111.9 L329.5,111.7 L333.0,111.5 L337.0,111.4 L342.0,111.3 L351.2,111.3 L360.5,111.3 L365.4,111.4 L369.5,111.5 L373.0,111.7 L376.2,111.9 L379.1,112.1 L381.9,112.4 L384.4,112.7 L386.9,113.1 L389.2,113.5 L391.4,114.0 L393.5,114.5 L395.6,115.1 L397.5,115.7 L399.4,116.3 L401.2,117.0 L402.9,117.8 L404.6,118.6 L406.2,119.4 L407.7,120.3 L409.2,121.2 L410.6,122.2 L412.0,123.2 L413.3,124.3 L414.5,125.4 L415.7,126.6 L416.9,127.8 L418.0,129.1 L419.0,130.4 L420.0,131.8 L421.0,133.2 L421.9,134.7 L422.7,136.2 L423.5,137.9 L424.2,139.5 L424.9,141.3 L425.6,143.1 L426.2,145.0 L426.7,147.0 L427.2,149.0 L427.7,151.2 L428.1,153.5 L428.5,155.9 L428.8,158.5 L429.0,161.2 L429.2,164.2 L429.4,167.5 L429.5,171.2 L429.6,175.8Z"/><path d="M426.9,184.5 L426.9,190.7 L426.8,194.6 L426.7,197.9 L426.5,201.0 L426.3,203.8 L426.0,206.4 L425.6,208.9 L425.2,211.3 L424.8,213.6 L424.3,215.8 L423.7,217.9 L423.1,219.9 L422.5,221.9 L421.7,223.8 L421.0,225.6 L420.2,227.3 L419.3,229.1 L418.4,230.7 L417.4,232.3 L416.4,233.8 L415.3,235.3 L414.2,236.8 L413.0,238.2 L411.8,239.5 L410.5,240.8 L409.1,242.0 L407.7,243.2 L406.3,244.3 L404.8,245.4 L403.2,246.4 L401.6,247.4 L399.9,248.3 L398.2,249.2 L396.4,250.0 L394.5,250.8 L392.6,251.5 L390.6,252.2 L388.6,252.8 L386.5,253.4 L384.3,253.9 L382.0,254.4 L379.6,254.8 L377.1,255.2 L374.5,255.6 L371.7,255.8 L368.8,256.1 L365.6,256.2 L362.1,256.4 L357.9,256.4 L351.5,256.5 L345.0,256.4 L340.9,256.4 L337.4,256.2 L334.2,256.1 L331.3,255.8 L328.5,255.6 L325.9,255.2 L323.4,254.8 L321.0,254.4 L318.7,253.9 L316.5,253.4 L314.4,252.8 L312.3,252.2 L310.3,251.5 L308.4,250.8 L306.6,250.0 L304.8,249.2 L303.0,248.3 L301.4,247.4 L299.7,246.4 L298.2,245.4 L296.7,244.3 L295.2,243.2 L293.8,242.0 L292.5,240.8 L291.2,239.5 L290.0,238.2 L288.8,236.8 L287.7,235.3 L286.6,233.8 L285.6,232.3 L284.6,230.7 L283.7,229.1 L282.8,227.3 L282.0,225.6 L281.2,223.8 L280.5,221.9 L279.8,219.9 L279.2,217.9 L278.7,215.8 L278.2,213.6 L277.7,211.3 L277.3,208.9 L277.0,206.4 L276.7,203.8 L276.5,201.0 L276.3,197.9 L276.1,194.6 L276.1,190.7 L276.0,184.5 L276.1,178.3 L276.1,174.4 L276.3,171.1 L276.5,168.0 L276.7,165.2 L277.0,162.6 L277.3,160.1 L277.7,157.7 L278.2,155.4 L278.7,153.2 L279.2,151.1 L279.8,149.1 L280.5,147.1 L281.2,145.2 L282.0,143.4 L282.8,141.7 L283.7,139.9 L284.6,138.3 L285.6,136.7 L286.6,135.2 L287.7,133.7 L288.8,132.2 L290.0,130.8 L291.2,129.5 L292.5,128.2 L293.8,127.0 L295.2,125.8 L296.7,124.7 L298.2,123.6 L299.7,122.6 L301.4,121.6 L303.0,120.7 L304.8,119.8 L306.6,119.0 L308.4,118.2 L310.3,117.5 L312.3,116.8 L314.4,116.2 L316.5,115.6 L318.7,115.1 L321.0,114.6 L323.4,114.2 L325.9,113.8 L328.5,113.4 L331.3,113.2 L334.2,112.9 L337.4,112.8 L340.9,112.6 L345.0,112.6 L351.5,112.5 L357.9,112.6 L362.1,112.6 L365.6,112.8 L368.8,112.9 L371.7,113.2 L374.5,113.4 L377.1,113.8 L379.6,114.2 L382.0,114.6 L384.3,115.1 L386.5,115.6 L388.6,116.2 L390.6,116.8 L392.6,117.5 L394.5,118.2 L396.4,119.0 L398.2,119.8 L399.9,120.7 L401.6,121.6 L403.2,122.6 L404.8,123.6 L406.3,124.7 L407.7,125.8 L409.1,127.0 L410.5,128.2 L411.8,129.5 L413.0,130.8 L414.2,132.2 L415.3,133.7 L416.4,135.2 L417.4,136.7 L418.4,138.3 L419.3,139.9 L420.2,141.7 L421.0,143.4 L421.7,145.2 L422.5,147.1 L423.1,149.1 L423.7,151.1 L424.3,153.2 L424.8,155.4 L425.2,157.7 L425.6,160.1 L426.0,162.6 L426.3,165.2 L426.5,168.0 L426.7,171.1 L426.8,174.4 L426.9,178.3Z"/><path d="M424.2,184.5 L424.2,188.5 L424.1,191.6 L423.9,194.4 L423.7,197.1 L423.5,199.6 L423.1,202.1 L422.8,204.4 L422.3,206.7 L421.8,209.0 L421.2,211.1 L420.6,213.2 L420.0,215.3 L419.2,217.3 L418.4,219.3 L417.6,221.2 L416.7,223.0 L415.7,224.8 L414.7,226.6 L413.6,228.3 L412.5,230.0 L411.3,231.6 L410.1,233.1 L408.8,234.6 L407.5,236.1 L406.1,237.5 L404.6,238.9 L403.1,240.2 L401.6,241.4 L400.0,242.6 L398.3,243.8 L396.6,244.9 L394.9,245.9 L393.1,246.9 L391.2,247.9 L389.3,248.8 L387.4,249.6 L385.4,250.4 L383.3,251.1 L381.2,251.7 L379.0,252.3 L376.8,252.9 L374.5,253.4 L372.2,253.8 L369.7,254.2 L367.2,254.5 L364.6,254.8 L361.9,255.0 L359.0,255.1 L355.8,255.2 L351.7,255.2 L347.7,255.2 L344.5,255.1 L341.6,255.0 L338.9,254.8 L336.3,254.5 L333.7,254.2 L331.3,253.8 L329.0,253.4 L326.7,252.9 L324.5,252.3 L322.3,251.7 L320.2,251.1 L318.1,250.4 L316.1,249.6 L314.2,248.8 L312.3,247.9 L310.4,246.9 L308.6,245.9 L306.9,244.9 L305.2,243.8 L303.5,242.6 L301.9,241.4 L300.4,240.2 L298.9,238.9 L297.4,237.5 L296.0,236.1 L294.7,234.6 L293.4,233.1 L292.2,231.6 L291.0,230.0 L289.9,228.3 L288.8,226.6 L287.8,224.8 L286.8,223.0 L285.9,221.2 L285.1,219.3 L284.3,217.3 L283.5,215.3 L282.9,213.2 L282.2,211.1 L281.7,209.0 L281.2,206.7 L280.7,204.4 L280.3,202.1 L280.0,199.6 L279.7,197.1 L279.5,194.4 L279.4,191.6 L279.3,188.5 L279.3,184.5 L279.3,180.5 L279.4,177.4 L279.5,174.6 L279.7,171.9 L280.0,169.4 L280.3,166.9 L280.7,164.6 L281.2,162.3 L281.7,160.0 L282.2,157.9 L282.9,155.8 L283.5,153.7 L284.3,151.7 L285.1,149.7 L285.9,147.8 L286.8,146.0 L287.8,144.2 L288.8,142.4 L289.9,140.7 L291.0,139.0 L292.2,137.4 L293.4,135.9 L294.7,134.4 L296.0,132.9 L297.4,131.5 L298.9,130.1 L300.4,128.8 L301.9,127.6 L303.5,126.4 L305.2,125.2 L306.9,124.1 L308.6,123.1 L310.4,122.1 L312.3,121.1 L314.2,120.2 L316.1,119.4 L318.1,118.6 L320.2,117.9 L322.3,117.3 L324.5,116.7 L326.7,116.1 L329.0,115.6 L331.3,115.2 L333.7,114.8 L336.3,114.5 L338.9,114.2 L341.6,114.0 L344.5,113.9 L347.7,113.8 L351.7,113.8 L355.8,113.8 L359.0,113.9 L361.9,114.0 L364.6,114.2 L367.2,114.5 L369.7,114.8 L372.2,115.2 L374.5,115.6 L376.8,116.1 L379.0,116.7 L381.2,117.3 L383.3,117.9 L385.4,118.6 L387.4,119.4 L389.3,120.2 L391.2,121.1 L393.1,122.1 L394.9,123.1 L396.6,124.1 L398.3,125.2 L400.0,126.4 L401.6,127.6 L403.1,128.8 L404.6,130.1 L406.1,131.5 L407.5,132.9 L408.8,134.4 L410.1,135.9 L411.3,137.4 L412.5,139.0 L413.6,140.7 L414.7,142.4 L415.7,144.2 L416.7,146.0 L417.6,147.8 L418.4,149.7 L419.2,151.7 L420.0,153.7 L420.6,155.8 L421.2,157.9 L421.8,160.0 L422.3,162.3 L422.8,164.6 L423.1,166.9 L423.5,169.4 L423.7,171.9 L423.9,174.6 L424.1,177.4 L424.2,180.5Z"/><path d="M421.5,184.5 L421.5,186.7 L421.4,188.9 L421.2,191.0 L421.0,193.2 L420.6,195.4 L420.3,197.5 L419.8,199.7 L419.3,201.8 L418.7,203.9 L418.1,206.0 L417.4,208.0 L416.6,210.1 L415.8,212.1 L414.9,214.1 L413.9,216.1 L412.9,218.0 L411.8,219.9 L410.7,221.7 L409.5,223.6 L408.2,225.4 L406.9,227.1 L405.6,228.8 L404.1,230.5 L402.7,232.1 L401.1,233.6 L399.6,235.2 L398.0,236.6 L396.3,238.1 L394.6,239.4 L392.9,240.7 L391.1,242.0 L389.2,243.2 L387.4,244.3 L385.5,245.4 L383.6,246.4 L381.6,247.4 L379.6,248.3 L377.6,249.1 L375.5,249.9 L373.5,250.6 L371.4,251.2 L369.3,251.8 L367.2,252.3 L365.0,252.8 L362.9,253.1 L360.7,253.5 L358.5,253.7 L356.4,253.9 L354.2,254.0 L352.0,254.0 L349.8,254.0 L347.6,253.9 L345.5,253.7 L343.3,253.5 L341.1,253.1 L339.0,252.8 L336.8,252.3 L334.7,251.8 L332.6,251.2 L330.5,250.6 L328.5,249.9 L326.4,249.1 L324.4,248.3 L322.4,247.4 L320.4,246.4 L318.5,245.4 L316.6,244.3 L314.8,243.2 L312.9,242.0 L311.1,240.7 L309.4,239.4 L307.7,238.1 L306.0,236.6 L304.4,235.2 L302.9,233.6 L301.3,232.1 L299.9,230.5 L298.4,228.8 L297.1,227.1 L295.8,225.4 L294.5,223.6 L293.3,221.7 L292.2,219.9 L291.1,218.0 L290.1,216.1 L289.1,214.1 L288.2,212.1 L287.4,210.1 L286.6,208.0 L285.9,206.0 L285.3,203.9 L284.7,201.8 L284.2,199.7 L283.7,197.5 L283.4,195.4 L283.0,193.2 L282.8,191.0 L282.6,188.9 L282.5,186.7 L282.5,184.5 L282.5,182.3 L282.6,180.1 L282.8,178.0 L283.0,175.8 L283.4,173.6 L283.7,171.5 L284.2,169.3 L284.7,167.2 L285.3,165.1 L285.9,163.0 L286.6,161.0 L287.4,158.9 L288.2,156.9 L289.1,154.9 L290.1,152.9 L291.1,151.0 L292.2,149.1 L293.3,147.3 L294.5,145.4 L295.8,143.6 L297.1,141.9 L298.4,140.2 L299.9,138.5 L301.3,136.9 L302.9,135.4 L304.4,133.8 L306.0,132.4 L307.7,130.9 L309.4,129.6 L311.1,128.3 L312.9,127.0 L314.8,125.8 L316.6,124.7 L318.5,123.6 L320.4,122.6 L322.4,121.6 L324.4,120.7 L326.4,119.9 L328.5,119.1 L330.5,118.4 L332.6,117.8 L334.7,117.2 L336.8,116.7 L339.0,116.2 L341.1,115.9 L343.3,115.5 L345.5,115.3 L347.6,115.1 L349.8,115.0 L352.0,115.0 L354.2,115.0 L356.4,115.1 L358.5,115.3 L360.7,115.5 L362.9,115.9 L365.0,116.2 L367.2,116.7 L369.3,117.2 L371.4,117.8 L373.5,118.4 L375.5,119.1 L377.6,119.9 L379.6,120.7 L381.6,121.6 L383.6,122.6 L385.5,123.6 L387.4,124.7 L389.2,125.8 L391.1,127.0 L392.9,128.3 L394.6,129.6 L396.3,130.9 L398.0,132.4 L399.6,133.8 L401.1,135.4 L402.7,136.9 L404.1,138.5 L405.6,140.2 L406.9,141.9 L408.2,143.6 L409.5,145.4 L410.7,147.3 L411.8,149.1 L412.9,151.0 L413.9,152.9 L414.9,154.9 L415.8,156.9 L416.6,158.9 L417.4,161.0 L418.1,163.0 L418.7,165.1 L419.3,167.2 L419.8,169.3 L420.3,171.5 L420.6,173.6 L421.0,175.8 L421.2,178.0 L421.4,180.1 L421.5,182.3Z"/></g>
<g stroke="#bdbdbd" stroke-width="0.8"><path d="M313,135.4 H408"/><path d="M292,151.3 H416"/><path d="M287,167 H420"/><path d="M286,182.5 H334"/><path d="M372,182.5 H420"/><path d="M286,198.2 H420"/><path d="M288,214 H418"/><path d="M293,229.8 H412"/><path d="M305,245.5 H400"/></g>
<path d="M330,119.6 L358.6,149.3 M400,176 L420,172 M377,268 L390,257" stroke="#bdbdbd" stroke-width="0.7"/>
<g fill="none" stroke="#bdbdbd" stroke-width="0.6"><path d="M256.9,160.2 Q258.4,183.4 257.4,206.6"/><path d="M251.9,163.0 Q246.3,183.8 246.1,204.6"/><path d="M278.9,163.0 Q280.1,184.4 278.5,205.9"/><path d="M254.4,163.2 Q257.6,184.7 256.0,206.1"/><path d="M269.5,162.5 Q264.9,184.5 264.2,206.5"/><path d="M250.9,160.8 Q256.9,184.1 255.3,207.3"/><path d="M270.7,160.4 Q272.7,184.1 275.8,207.8"/><path d="M277.1,158.6 Q276.6,181.2 281.7,203.8"/><path d="M278.0,161.8 Q277.7,183.3 277.2,204.8"/><path d="M261.2,161.5 Q264.3,184.0 259.4,206.5"/><path d="M269.8,163.1 Q274.1,186.0 274.9,208.9"/><path d="M254.7,163.8 Q257.6,186.1 259.1,208.4"/><path d="M270.7,163.0 Q266.8,184.7 267.2,206.4"/><path d="M251.8,163.9 Q257.0,183.7 256.1,203.5"/><path d="M261.9,159.8 Q263.5,183.7 257.7,207.6"/><path d="M251.3,158.3 Q250.3,182.8 252.7,207.3"/><path d="M254.9,201.4 L276.5,209.4"/><path d="M250.4,174.6 L276.0,167.1"/><path d="M252.0,169.3 L275.9,163.8"/><path d="M254.3,162.0 L277.4,169.3"/><path d="M251.9,202.1 L276.7,202.5"/><path d="M253.0,190.3 L276.2,192.2"/><path d="M252.5,204.2 L276.8,207.7"/><path d="M251.5,171.2 L274.1,171.5"/><path d="M437.5,162.5 Q429.8,188.0 431.7,213.5"/><path d="M439.7,160.4 Q440.2,187.1 441.3,213.8"/><path d="M441.7,164.2 Q436.1,189.3 440.0,214.4"/><path d="M421.9,165.8 Q422.6,188.6 424.1,211.5"/><path d="M439.0,162.2 Q436.6,187.0 436.8,211.9"/><path d="M439.1,162.3 Q433.1,188.4 436.7,214.6"/><path d="M438.2,161.9 Q442.7,186.6 441.0,211.3"/><path d="M427.6,162.6 Q421.8,188.4 423.9,214.2"/><path d="M430.3,165.0 Q432.9,188.8 428.3,212.6"/><path d="M425.4,163.9 Q423.9,189.6 423.5,215.3"/><path d="M427.2,163.2 Q428.0,187.2 422.7,211.1"/><path d="M446.8,161.7 Q446.4,188.3 443.0,214.8"/><path d="M445.8,160.8 Q447.8,186.3 443.9,211.8"/><path d="M428.7,162.5 Q426.9,187.5 426.8,212.5"/><path d="M449.5,160.0 Q451.2,187.8 445.3,215.7"/><path d="M451.6,165.7 Q448.4,190.6 450.8,215.6"/><path d="M424.2,200.8 L448.7,201.1"/><path d="M421.7,177.0 L450.9,170.1"/><path d="M421.4,192.6 L447.9,185.3"/><path d="M423.5,209.0 L447.4,215.3"/><path d="M422.9,208.8 L451.9,212.7"/><path d="M421.5,170.9 L448.7,171.3"/><path d="M424.7,183.5 L448.9,181.0"/><path d="M424.3,175.1 L449.6,179.6"/></g>
<g fill="none" stroke="#bdbdbd" stroke-width="0.7"><path d="M246,161 Q244,160 244,165 V206 Q244,210 248,210"/><path d="M452,160 Q456,175 454,190 Q455,205 452,222"/></g>
<circle cx="350.6" cy="187.6" r="39" fill="none" stroke="#bdbdbd" stroke-width="0.8"/>
<g fill="none" stroke="#9a9a9a" stroke-width="0.65"><circle cx="350.6" cy="187.6" r="38.50"/><circle cx="350.6" cy="187.6" r="36.75"/><circle cx="350.6" cy="187.6" r="35.00"/><circle cx="350.6" cy="187.6" r="33.25"/><circle cx="350.6" cy="187.6" r="31.50"/><circle cx="350.6" cy="187.6" r="29.75"/><circle cx="350.6" cy="187.6" r="28.00"/><circle cx="350.6" cy="187.6" r="26.25"/><circle cx="350.6" cy="187.6" r="24.50"/><circle cx="350.6" cy="187.6" r="22.75"/><circle cx="350.6" cy="187.6" r="21.00"/><circle cx="350.6" cy="187.6" r="19.25"/><circle cx="350.6" cy="187.6" r="17.50"/><circle cx="350.6" cy="187.6" r="15.75"/><circle cx="350.6" cy="187.6" r="14.00"/></g>
<path d="M355.8,150 V265" stroke="#bdbdbd" stroke-width="0.6"/>
<path d="M340,152 Q350,148 360,152 L358,158 Q350,155 342,158Z" fill="#555"/>
<circle cx="353.1" cy="184.4" r="13.5" fill="#a4a4a4"/>
<circle cx="352.3" cy="183.1" r="8.3" fill="#000"/>
<circle cx="352.9" cy="185.5" r="4.7" fill="none" stroke="#999" stroke-width="0.6"/>
<path d="M355.8,171 V197.5" stroke="#bbb" stroke-width="0.7"/>
<circle cx="348.7" cy="216.3" r="4.1" fill="#fff"/>
<path d="M267.6,111.3 H257.2 A10.4,10.4 0 0 1 267.6,100.9Z M267.6,111.3 H278 A10.4,10.4 0 0 1 267.6,121.7Z" fill="#f26060"/>
<circle cx="267.6" cy="111.3" r="9.9" fill="none" stroke="#f26060" stroke-width="1.1"/>
<path d="M284.1,223.7 L300.9,225.9 L297.2,236.7Z" fill="#e82010"/>
<g stroke="#aaa022" stroke-width="1.1" fill="none"><path d="M455,98.7 H472 M466.6,98.7 V273.7 M455.4,273.7 H471.7 M455.4,273.7 V290"/><path d="M244.3,271.9 V287.9 M244.3,283.6 H335 L336,284.5 H455.4"/><path d="M233.2,266.4 H249.7"/></g>
<path d="M228.3,271.9 H244.3" stroke="#6a6200" stroke-width="1.1"/>
<path d="M225.2,270.8 L229.2,267.9 H236.8 L233.2,271.4Z" fill="#1a8ae0"/>
<text x="350" y="293.7" font-size="11.5" fill="#1864bc" text-anchor="middle" textLength="39.7" lengthAdjust="spacingAndGlyphs" font-family="Liberation Sans, sans-serif">52.283</text>
<text x="0" y="0" font-size="11.5" fill="#1864bc" text-anchor="middle" textLength="38.7" lengthAdjust="spacingAndGlyphs" transform="translate(475.8,187.1) rotate(-90)" font-family="Liberation Sans, sans-serif">43.311</text>
<path d="M97.8,285 V268" stroke="#00e000" stroke-width="2"/><path d="M95.6,271 L97.8,264.5 L100,271Z" fill="#00e000"/>
<path d="M100,287 H115" stroke="#0000ff" stroke-width="2"/><path d="M114,284.6 L120,287 L114,289.4Z" fill="#0000ff"/>
<circle cx="98.8" cy="286.1" r="2.1" fill="#c00000"/>
<rect x="53" y="300" width="118.2" height="13" fill="#1f5d98"/>
<text x="56.9" y="309.6" font-size="8.3" font-weight="bold" fill="#e2e6ea" stroke="#e2e6ea" stroke-width="0.15" textLength="112.5" lengthAdjust="spacingAndGlyphs" font-family="Liberation Sans, sans-serif" xml:space="preserve">G1  G17 G90 G21 G40 G43</text>
<!-- CANVAS END --></g>
<g fill="#1a588f">
<!-- hamburger -->
<rect x="10" y="10" width="32.7" height="8.6" rx="4.3"/>
<rect x="10" y="22.2" width="32.7" height="8.6" rx="4.3"/>
<rect x="10" y="34.2" width="32.7" height="8.6" rx="4.3"/>
</g>
<!-- gcode/dxf file icons -->
<g id="fileic">
<path d="M57.3,26.3 L67.7,4.3 L84.5,9.3 L76,20 L70,28 L82,47.6 L60.1,35.9 L61.2,31.5 L58.2,29.9 L59,28.5 Z" fill="#fff" stroke="#1a588f" stroke-width="0.9" stroke-linejoin="round"/>
<path d="M85.6,3.8 L101.9,25.5 L81.8,47.8 L68.8,28.3 Z" fill="#1a588f"/>
<path d="M80.4,9.3 L89.4,11.3 L79.7,33.5 L69.3,27.9 L74.9,21.7 L74.9,17.6 L77.6,13.8 Z" fill="#9cb8d2"/>
<path d="M69.3,27.9 L74.9,21.7 L74.9,17.6 L77.6,13.8 L80.4,9.3" fill="none" stroke="#1a588f" stroke-width="1"/>
</g>
<text x="0" y="0" font-size="7.6" font-weight="bold" fill="#1a588f" transform="translate(64.1,31.6) rotate(-66.5)" textLength="25" lengthAdjust="spacingAndGlyphs" stroke="#1a588f" stroke-width="0.2">G-code</text>
<use href="#fileic" x="52.8" y="0"/>
<text x="0" y="0" font-size="10" font-weight="bold" fill="#1a588f" transform="translate(117.6,29.2) rotate(-57)" textLength="20" lengthAdjust="spacingAndGlyphs" stroke="#1a588f" stroke-width="0.27">DXF</text>
<!-- refresh -->
<g fill="none" stroke="#1a588f" stroke-width="6"><path d="M194.38,17.20 A13.3,13.3 0 0 1 178.67,38.05"/><path d="M174.62,35.00 A13.3,13.3 0 0 1 190.33,14.15"/></g>
<path d="M190.45,20.75 L198.47,13.52 L190.03,13.68Z" fill="#1a588f"/>
<path d="M178.55,31.45 L170.53,38.68 L178.97,38.52Z" fill="#1a588f"/>
<!-- zoom icons -->
<g id="zoomic">
<line x1="243" y1="25" x2="252.6" y2="35.6" stroke="#1a588f" stroke-width="5.4" stroke-linecap="round"/>
<circle cx="233.5" cy="16.8" r="10.9" fill="#7399bb" stroke="#2466a2" stroke-width="1.4"/>
</g>
<rect x="216.4" y="34.3" width="16.4" height="12.2" fill="none" stroke="#3b74aa" stroke-width="1.1"/>
<use href="#zoomic" x="52.8"/>
<path d="M270.2,37.5 H284.6 V42.4 H270.2Z M275,33.2 H279.7 V46.7 H275Z" fill="#1a588f"/>
<use href="#zoomic" x="105.4"/>
<rect x="322.9" y="37.8" width="14.1" height="4.8" fill="#1a588f"/>
<!-- dimension icon -->
<g fill="#1a588f" stroke="none">
<rect x="375.6" y="21.2" width="1.3" height="9.8"/>
<rect x="414" y="21.2" width="1.3" height="9.8"/>
<rect x="376" y="25.5" width="38.5" height="1.2"/>
<path d="M376.5,26.1 L387.4,23 L386,26.1 L387.4,29.2Z"/>
<path d="M414.4,26.1 L403.3,23 L404.7,26.1 L403.3,29.2Z"/>
</g>
<!-- window icon -->
<rect x="429" y="11.3" width="39" height="29.6" fill="none" stroke="#2a68a2" stroke-width="1.5"/>
<rect x="431.8" y="27.6" width="15" height="10.5" rx="1" fill="none" stroke="#4a80b2" stroke-width="1.1"/>
<!-- VARS -->
<g font-size="3.9" fill="#b4c2cf">
<text x="478.5" y="9.5">#5029=123,456</text><text x="480" y="13.5">#5029=123,456</text><text x="481.5" y="17.5">#5029=123,456</text><text x="483" y="21.5">#5029=123,456</text>
<text x="493" y="37.5">#5029=123,456</text><text x="494.5" y="41.5">#5029=123,456</text><text x="496" y="45.5">#5029=123,456</text>
</g>
<text x="479.1" y="33.7" font-size="15.6" font-weight="bold" fill="#1a588f" textLength="43.7" lengthAdjust="spacingAndGlyphs" stroke="#1a588f" stroke-width="0.44">VARS</text>
<!-- keyboard -->
<path d="M543.6,22.6 L545.8,9.2 Q546.4,7.2 548.4,7.2 H559.4 Q561.4,7.2 562.0,9.2 L564.1,22.6 Q564.1,24.6 562.1,24.6 H545.6 Q543.6,24.6 543.6,22.6Z" fill="#1a588f" stroke="#5f8dbb" stroke-width="0.6"/><path d="M546.4,19.9 H561.4 M546.4,19.9 L544.4,23.1 M561.4,19.9 L563.3000000000001,23.1" stroke="#5f8dbb" stroke-width="0.6" fill="none"/>
<path d="M532.3,42 L534.4,26.5 Q535,24.5 537,24.5 H548 Q550,24.5 550.6,26.5 L552.3,42 Q552.3,44 550.3,44 H534.3 Q532.3,44 532.3,42Z" fill="#1a588f" stroke="#5f8dbb" stroke-width="0.6"/><path d="M535,36.7 H550 M535,36.7 L533.0999999999999,42.5 M550,36.7 L551.5,42.5" stroke="#5f8dbb" stroke-width="0.6" fill="none"/>
<path d="M554.5,44.3 L556.1999999999999,28.7 Q556.8,26.7 558.8,26.7 H570.7 Q572.7,26.7 573.3000000000001,28.7 L575.5,44.3 Q575.5,46.3 573.5,46.3 H556.5 Q554.5,46.3 554.5,44.3Z" fill="#1a588f" stroke="#5f8dbb" stroke-width="0.6"/><path d="M556.8,39 H572.7 M556.8,39 L555.3,44.8 M572.7,39 L574.7,44.8" stroke="#5f8dbb" stroke-width="0.6" fill="none"/>
<g fill="#fff" font-size="9" stroke="#fff" stroke-width="0.3">
<text x="548" y="15.8" textLength="6.3" lengthAdjust="spacingAndGlyphs">L</text>
<text x="536.8" y="32.2" textLength="7.3" lengthAdjust="spacingAndGlyphs">B</text>
<text x="559.5" y="34.5" textLength="7.8" lengthAdjust="spacingAndGlyphs">A</text>
</g>
<!-- left column icons -->
<g stroke="#1a588f" stroke-width="1.35" fill="none">
<path d="M26.1,64.8 L42.4,74.3 L26.1,83.5 L9.6,74.3Z"/>
<path d="M26.1,77.6 L42.4,86.9 L26.1,96.1 L9.6,86.9Z"/>
<path d="M26.1,64.8 V77.6 M42.4,74.3 V86.9 M26.1,83.5 V96.1 M9.6,74.3 V86.9"/>
</g>
<g stroke="#1a588f" stroke-width="0.8" fill="none"><path d="M9.6,74.3 V68.5"/><path d="M26.1,77.6 L34.5,72.5"/><path d="M26.1,96.1 L31.5,99.5"/></g>
<g fill="#1a588f"><path d="M9.6,66.5 L8.2,69.5 L11,69.5Z"/><path d="M35.5,72 L32.5,72.2 L33.8,74.5Z"/><path d="M32.5,100 L29.6,99.8 L31,97.7Z"/></g>
<g font-weight="bold" fill="#1a588f" font-size="9" stroke="#1a588f" stroke-width="0.25">
<text x="6.8" y="66.2" textLength="6" lengthAdjust="spacingAndGlyphs">Z</text>
<text x="38.8" y="70.5" textLength="6" lengthAdjust="spacingAndGlyphs">Y</text>
<text x="34" y="103" textLength="6" lengthAdjust="spacingAndGlyphs">X</text>
</g>
<g stroke="#1a588f" stroke-width="0.9" fill="none">
<path d="M12.5,109.9 V153.4 M4.1,145.5 H48.9"/>
<path d="M12.5,162.7 V206.2 M4.1,198.3 H48.9"/>
<path d="M12.5,215.5 V259 M4.1,251.1 H48.9"/>
</g>
<g font-weight="bold" fill="#1a588f" font-size="10.2" stroke="#1a588f" stroke-width="0.25">
<text x="14.9" y="117.5" textLength="6.2" lengthAdjust="spacingAndGlyphs">Y</text>
<text x="41.6" y="142.6" textLength="6.4" lengthAdjust="spacingAndGlyphs">X</text>
<text x="14.9" y="170" textLength="6.2" lengthAdjust="spacingAndGlyphs">Z</text>
<text x="41.6" y="195.1" textLength="6.4" lengthAdjust="spacingAndGlyphs">X</text>
<text x="14.9" y="222.5" textLength="6.2" lengthAdjust="spacingAndGlyphs">Z</text>
<text x="41.6" y="247.6" textLength="6.4" lengthAdjust="spacingAndGlyphs">Y</text>
</g>
<rect x="7.8" y="271.2" width="37.3" height="37.5" rx="1" fill="#1a588f"/>
<path d="M19,303.8 V277.8 H27 A7.9,7.9 0 0 1 27,293.5 H19" fill="none" stroke="#d5dad5" stroke-width="4.3"/>

<!-- X0 Y0 buttons -->
<g fill="#1a588f">
<path d="M665.9,23.8 V33 L675,28.4Z M698.3,23.8 V33 L689.1,28.4Z"/>
<path d="M705,23.8 V33 L714.1,28.4Z M737.4,23.8 V33 L728.2,28.4Z"/>
<path d="M665.9,63.3 V72.7 L674.8,67.9Z M698,63.3 V72.7 L689.4,67.9Z"/>
<path d="M705.5,63.3 V72.7 L714.3,67.9Z M737.6,63.3 V72.7 L729,67.9Z"/>
</g>
<g font-weight="bold" fill="#1a588f" font-size="12.5" stroke="#1a588f" stroke-width="0.35">
<text x="675" y="33" textLength="12.3" lengthAdjust="spacingAndGlyphs">X0</text>
<text x="714.2" y="33" textLength="12.3" lengthAdjust="spacingAndGlyphs">Y0</text>
<text x="714.2" y="72.5" textLength="13.8" lengthAdjust="spacingAndGlyphs">A0</text>
</g>
<g font-weight="bold" fill="#1a588f" font-size="11.4" stroke="#1a588f" stroke-width="0.32">
<text x="675" y="66.7" textLength="13.2" lengthAdjust="spacingAndGlyphs">X0</text>
<text x="675.5" y="79.1" textLength="12.8" lengthAdjust="spacingAndGlyphs">Y0</text>
</g>

<!-- axis buttons -->
<g id="axb">
<circle cx="771.5" cy="26.2" r="11" fill="none" stroke="#1a588f" stroke-width="1.8"/>
<path d="M758.1,26.2 H784.8 M771.5,12.9 V39.8" stroke="#1a588f" stroke-width="1.8"/>
</g>
<use href="#axb" y="39.7"/><use href="#axb" y="79.4"/><use href="#axb" y="119.1"/>
<circle cx="762.4" cy="41.4" r="4.2" fill="url(#led)"/>
<circle cx="762.4" cy="81.1" r="4.2" fill="url(#ledg)"/>
<circle cx="762.4" cy="120.8" r="4.2" fill="url(#ledg)"/>
<circle cx="762.4" cy="160.5" r="4.2" fill="url(#ledg)"/>
<g font-weight="bold" fill="#1a588f" font-size="12.8" stroke="#1a588f" stroke-width="0.36">
<text x="781.4" y="45.7" textLength="8.1" lengthAdjust="spacingAndGlyphs">X</text>
<text x="781.4" y="85.4" textLength="8.1" lengthAdjust="spacingAndGlyphs">Y</text>
<text x="781.6" y="125.1" textLength="7.8" lengthAdjust="spacingAndGlyphs">Z</text>
<text x="781" y="164.8" textLength="8.8" lengthAdjust="spacingAndGlyphs">A</text>
</g>
<g font-weight="bold" fill="#f47920" font-size="12" stroke="#f47920" stroke-width="0.34">
<text x="797" y="28" textLength="24.5" lengthAdjust="spacingAndGlyphs">G54:</text>
<text x="797" y="70.6" textLength="24.5" lengthAdjust="spacingAndGlyphs">G54:</text>
<text x="797" y="112.9" textLength="24.5" lengthAdjust="spacingAndGlyphs">G54:</text>
</g>
<g font-weight="bold" fill="#c0101c" font-size="12.6" text-anchor="end" stroke="#c0101c" stroke-width="0.35">
<text x="891.8" y="24.9" textLength="47.5" lengthAdjust="spacingAndGlyphs">-23.964</text>
<text x="891.8" y="64.4" textLength="39.5" lengthAdjust="spacingAndGlyphs">-5.417</text>
<text x="891.6" y="104" textLength="42.7" lengthAdjust="spacingAndGlyphs">21.000</text>
<text x="891.6" y="143.7" textLength="26.7" lengthAdjust="spacingAndGlyphs">0.00</text>
</g>
<g font-weight="bold" fill="#a2a018" font-size="10.5" text-anchor="end" stroke="#a2a018" stroke-width="0.29">
<text x="891.5" y="44.1" textLength="44.2" lengthAdjust="spacingAndGlyphs">2313.060</text>
<text x="891.5" y="83.6" textLength="38.5" lengthAdjust="spacingAndGlyphs">875.043</text>
<text x="891.5" y="122.9" textLength="41.4" lengthAdjust="spacingAndGlyphs">-378.412</text>
<text x="891.5" y="162.8" textLength="35.9" lengthAdjust="spacingAndGlyphs">-229.18</text>
</g>

<!-- jog arrows -->
<g fill="#1a588f">
<use href="#arr" transform="translate(684.7,201.9) rotate(-45)"/>
<use href="#arr" transform="translate(734.6,205.5)"/>
<use href="#arr" transform="translate(784.6,201.9) rotate(45)"/>
<use href="#arr" transform="translate(688.3,251.8) rotate(-90)"/>
<use href="#arr" transform="translate(781.0,251.8) rotate(90)"/>
<use href="#arr" transform="translate(684.7,301.6) rotate(-135)"/>
<use href="#arr" transform="translate(734.6,298.0) rotate(180)"/>
<use href="#arr" transform="translate(784.6,301.6) rotate(135)"/>
</g>
<g font-weight="bold" fill="#1a588f" stroke="#1a588f" stroke-width="0.5" font-size="32">
<text x="811.6" y="216.4" textLength="15.3" lengthAdjust="spacingAndGlyphs">Z</text>
<text x="810.9" y="309.1" textLength="15.4" lengthAdjust="spacingAndGlyphs">Z</text>
<text x="672.2" y="361.5" textLength="19.3" lengthAdjust="spacingAndGlyphs">A</text>
<text x="765" y="361.4" textLength="19.3" lengthAdjust="spacingAndGlyphs">A</text>
</g>
<g fill="#1a588f">
<rect x="829" y="202.7" width="13.8" height="4.2"/><rect x="833.8" y="196.9" width="4.2" height="15.8"/>
<rect x="831.1" y="295.3" width="14.2" height="3.8"/>
<rect x="692.9" y="348" width="14.1" height="3.6"/>
<rect x="786" y="347.6" width="13.8" height="4.2"/><rect x="790.8" y="341.8" width="4.2" height="15.8"/>
</g>
<g fill="#1a588f" font-size="11.5" text-anchor="middle" stroke="#1a588f" stroke-width="0.2">
<text x="734.4" y="267.3">0</text>
<text x="826.6" y="256.1">0</text>
<text x="734.45" y="355">0</text>
</g>
<text x="726.6" y="248.2" font-size="21.5" fill="#1a588f" stroke="#1a588f" stroke-width="0.35">∞</text>

<!-- step buttons -->
<rect x="860.2" y="202.6" width="26.6" height="10" fill="#9fb6ca"/>
<g stroke="#8aa4ba" stroke-width="0.6"><path d="M862.8,202.6 v2"/><path d="M865.4,202.6 v3"/><path d="M868.0,202.6 v2"/><path d="M870.6,202.6 v3"/><path d="M873.2,202.6 v2"/><path d="M875.8,202.6 v3"/><path d="M878.4,202.6 v2"/><path d="M881.0,202.6 v3"/><path d="M883.6,202.6 v2"/><path d="M886.2,202.6 v3"/></g>
<path d="M860.2,195.4 v6.6 M885.7,195.4 v6.6 M861,198.8 H885" stroke="#1a588f" stroke-width="1"/>
<path d="M860.6,198.8 l5,-2 v4z M885.3,198.8 l-5,-2 v4z" fill="#1a588f"/>
<text x="873" y="194.9" font-size="10.6" font-weight="bold" fill="#1a588f" text-anchor="middle" textLength="21.7" lengthAdjust="spacingAndGlyphs" stroke="#1a588f" stroke-width="0.30">SET</text>
<rect x="860.2" y="242.1" width="26.6" height="10" fill="#9fb6ca"/>
<g stroke="#8aa4ba" stroke-width="0.6"><path d="M862.8,242.1 v2"/><path d="M865.4,242.1 v3"/><path d="M868.0,242.1 v2"/><path d="M870.6,242.1 v3"/><path d="M873.2,242.1 v2"/><path d="M875.8,242.1 v3"/><path d="M878.4,242.1 v2"/><path d="M881.0,242.1 v3"/><path d="M883.6,242.1 v2"/><path d="M886.2,242.1 v3"/></g>
<path d="M860.2,234.9 v6.6 M885.7,234.9 v6.6 M861,238.3 H885" stroke="#1a588f" stroke-width="1"/>
<path d="M860.6,238.3 l5,-2 v4z M885.3,238.3 l-5,-2 v4z" fill="#1a588f"/>
<text x="873" y="234.4" font-size="10.6" font-weight="bold" fill="#1a588f" text-anchor="middle" textLength="25.1" lengthAdjust="spacingAndGlyphs" stroke="#1a588f" stroke-width="0.30">0.01</text>
<rect x="860.2" y="281.6" width="26.6" height="10" fill="#9fb6ca"/>
<g stroke="#8aa4ba" stroke-width="0.6"><path d="M862.8,281.6 v2"/><path d="M865.4,281.6 v3"/><path d="M868.0,281.6 v2"/><path d="M870.6,281.6 v3"/><path d="M873.2,281.6 v2"/><path d="M875.8,281.6 v3"/><path d="M878.4,281.6 v2"/><path d="M881.0,281.6 v3"/><path d="M883.6,281.6 v2"/><path d="M886.2,281.6 v3"/></g>
<path d="M860.2,274.4 v6.6 M885.7,274.4 v6.6 M861,277.8 H885" stroke="#1a588f" stroke-width="1"/>
<path d="M860.6,277.8 l5,-2 v4z M885.3,277.8 l-5,-2 v4z" fill="#1a588f"/>
<text x="873" y="273.9" font-size="10.6" font-weight="bold" fill="#1a588f" text-anchor="middle" textLength="17.8" lengthAdjust="spacingAndGlyphs" stroke="#1a588f" stroke-width="0.30">0.1</text>
<rect x="860.2" y="321.1" width="26.6" height="10" fill="#9fb6ca"/>
<g stroke="#8aa4ba" stroke-width="0.6"><path d="M862.8,321.1 v2"/><path d="M865.4,321.1 v3"/><path d="M868.0,321.1 v2"/><path d="M870.6,321.1 v3"/><path d="M873.2,321.1 v2"/><path d="M875.8,321.1 v3"/><path d="M878.4,321.1 v2"/><path d="M881.0,321.1 v3"/><path d="M883.6,321.1 v2"/><path d="M886.2,321.1 v3"/></g>
<path d="M860.2,313.9 v6.6 M885.7,313.9 v6.6 M861,317.3 H885" stroke="#1a588f" stroke-width="1"/>
<path d="M860.6,317.3 l5,-2 v4z M885.3,317.3 l-5,-2 v4z" fill="#1a588f"/>
<text x="873" y="313.4" font-size="10.6" font-weight="bold" fill="#1a588f" text-anchor="middle" textLength="17.4" lengthAdjust="spacingAndGlyphs" stroke="#1a588f" stroke-width="0.30">1.0</text>
<rect x="860.2" y="360.6" width="26.6" height="10" fill="#9fb6ca"/>
<g stroke="#8aa4ba" stroke-width="0.6"><path d="M862.8,360.6 v2"/><path d="M865.4,360.6 v3"/><path d="M868.0,360.6 v2"/><path d="M870.6,360.6 v3"/><path d="M873.2,360.6 v2"/><path d="M875.8,360.6 v3"/><path d="M878.4,360.6 v2"/><path d="M881.0,360.6 v3"/><path d="M883.6,360.6 v2"/><path d="M886.2,360.6 v3"/></g>
<path d="M860.2,353.4 v6.6 M885.7,353.4 v6.6 M861,356.8 H885" stroke="#1a588f" stroke-width="1"/>
<path d="M860.6,356.8 l5,-2 v4z M885.3,356.8 l-5,-2 v4z" fill="#1a588f"/>
<text x="872.7" y="354.3" font-size="15" font-weight="bold" fill="#1a588f" text-anchor="middle" stroke="#1a588f" stroke-width="0.42">∞</text>
<!-- bottom mid panels -->
<g fill="#1a588f">
<path d="M11.5,355.1 L40.7,339.6 V370.6Z"/>
<path d="M121.5,355.1 L91.3,339.6 V370.6Z"/>
<path d="M140.3,355.1 L169.5,339.6 V370.6Z"/>
<path d="M250.3,355.1 L220.1,339.6 V370.6Z"/>
<path d="M272.1,355.2 L301.3,339.5 V370.9Z"/>
<path d="M382,355.2 L351.8,339.5 V370.9Z"/>
</g>
<g font-size="10.2" fill="#2a2a2a" text-anchor="middle">
<text x="65.9" y="332.9" textLength="80" lengthAdjust="spacingAndGlyphs">Jog over speed,[%]</text>
<text x="194.2" y="332.9" textLength="65" lengthAdjust="spacingAndGlyphs">Over Speed,[%]</text>
<text x="326" y="331.9" textLength="97.5" lengthAdjust="spacingAndGlyphs">Spindle Speed, [rpm]</text>
</g>
<g font-size="10.2" fill="#2a2a2a" text-anchor="end">
<text x="474.6" y="334.4" textLength="78" lengthAdjust="spacingAndGlyphs">Tool Length, [mm]</text>
<text x="474.6" y="350" textLength="19" lengthAdjust="spacingAndGlyphs">Tool</text>
<text x="474.6" y="366.8" textLength="73" lengthAdjust="spacingAndGlyphs">Z correction, mm</text>
</g>
<g font-weight="bold" fill="#1a588f" text-anchor="middle" stroke="#1a588f" stroke-width="0.34">
<text x="65.9" y="359.4" font-size="11" textLength="18" lengthAdjust="spacingAndGlyphs">100</text>
<text x="194.2" y="359.4" font-size="11" textLength="18" lengthAdjust="spacingAndGlyphs">100</text>
<text x="326.2" y="358.8" font-size="11" textLength="29" lengthAdjust="spacingAndGlyphs">15600</text>
<text x="500.9" y="334.8" font-size="10.5" textLength="23.8" lengthAdjust="spacingAndGlyphs">0.000</text>
<text x="497.2" y="351.3" font-size="13" textLength="15" lengthAdjust="spacingAndGlyphs">T7</text>
<text x="500.9" y="368.2" font-size="10.5" textLength="23.8" lengthAdjust="spacingAndGlyphs">0.000</text>
</g>
<!-- probe icons -->
<g fill="#1a588f">
<rect x="558.2" y="330.6" width="15.6" height="18.3" rx="2"/>
<ellipse cx="566" cy="331" rx="7.8" ry="1.8" fill="#2a6aa6"/>
<rect x="565" y="348" width="2" height="16"/>
<circle cx="566.1" cy="365.6" r="1.8"/>
</g>
<g fill="#d5dad5"><rect x="559.5" y="335.3" width="1.3" height="2.5"/><rect x="559.5" y="342" width="1.3" height="2.5"/></g>
<g fill="#1a588f">
<rect x="599.9" y="327.1" width="26.1" height="3.4"/>
<path d="M603,330.5 H622.8 L622.6,345.5 Q622.5,347.6 620.5,347.6 H606 Q604.1,347.6 604.1,345.5Z"/>
</g>
<g stroke="#d5dad5" stroke-width="0.7"><path d="M603,331.8 H623 M603.5,336 H622.8 M604,341.2 H622.5"/></g>
<g fill="#d5dad5"><rect x="605.8" y="340.5" width="1.1" height="1.3"/><rect x="612.2" y="340.5" width="1.1" height="1.3"/><rect x="618.6" y="340.5" width="1.1" height="1.3"/></g>
<rect x="610.8" y="347.8" width="4" height="12.6" rx="1.5" fill="#5a5a5a"/>
<path d="M611,350.5 L614.6,348.8 M611,354 L614.6,352.3 M611,357.5 L614.6,355.8" stroke="#e0e0e0" stroke-width="0.8"/>
<g stroke="#6a90b8" stroke-width="0.8" fill="none">
<path d="M619.1,348.1 H637.8 M619.1,360.2 H637.8"/>
<path d="M634.6,337.5 V347 M634.6,361 V370.6"/>
</g>
<g fill="#6a90b8"><path d="M633.4,344.6 L634.6,347.6 L635.8,344.6Z M633.4,363.4 L634.6,360.6 L635.8,363.4Z"/></g>

<!-- gcode panel -->
<g fill="#1a588f">
<rect x="69" y="399.6" width="5.3" height="4.3"/><rect x="76" y="399.6" width="5.2" height="4.3"/><rect x="82.8" y="399.6" width="5.3" height="4.3"/>
<rect x="69" y="406" width="5.3" height="4.4"/><rect x="76" y="406" width="5.2" height="4.4"/><rect x="82.8" y="406" width="5.3" height="4.4"/>
<rect x="69" y="412.5" width="5.3" height="4.3"/><rect x="76" y="412.5" width="5.2" height="4.3"/><rect x="82.8" y="412.5" width="5.3" height="4.3"/>
</g>
<g stroke="#c4c8c0" stroke-width="0.5"><path d="M65,396 H99 M65,403 H99 M65,410 H99 M65,417 H99 M69,389 V420 M76,389 V420 M83,389 V420 M90,389 V420 M97,389 V420"/></g>
<rect x="66" y="445" width="32" height="7" fill="#9fb6ca" transform="rotate(-17 82 448.5)"/>
<rect x="72.5" y="429.8" width="10" height="10" fill="#6b93b8" stroke="#1a588f" stroke-width="0.9" transform="rotate(-20 77.5 434.8)"/>
<path d="M70,431 Q69,436 72,439" stroke="#1a588f" stroke-width="1.1" fill="none"/>
<path d="M86,436 Q87,440 84,442" stroke="#1a588f" stroke-width="1.1" fill="none"/>
<g fill="#1a588f">
<rect x="79.7" y="462.1" width="19.1" height="2.6"/>
<path d="M80.9,464.6 H98.1 L97,468 H96 L95.6,474.5 Q95.5,476.3 93.5,476.3 H84.8 Q82.8,476.3 82.7,474.5 L82.3,468 H81.6Z"/>
</g>
<g stroke="#d5dad5" stroke-width="0.6"><path d="M81,465.2 H98 M81.6,467.9 H97 M82.5,472.7 H96"/></g>
<g fill="#d5dad5"><rect x="84.5" y="469.6" width="1.2" height="0.9"/><rect x="88.6" y="469.6" width="1.2" height="0.9"/><rect x="92.7" y="469.6" width="1.2" height="0.9"/></g>
<path d="M89,476.5 L90.5,482.5" stroke="#666" stroke-width="1.6"/>
<g font-weight="bold" fill="#2e68a0" font-size="8.7" stroke="#2e68a0" stroke-width="0.24">
<text x="65.4" y="479.8" textLength="17" lengthAdjust="spacingAndGlyphs">Run</text>
<text x="65.4" y="486.2" textLength="21.8" lengthAdjust="spacingAndGlyphs">from</text>
<text x="65.4" y="492.6" textLength="21" lengthAdjust="spacingAndGlyphs">Here</text>
</g>
<g font-weight="bold" fill="#1a588f" font-size="13.5" stroke="#1a588f" stroke-width="0.38">
<text x="3.9" y="436.2" textLength="44.7" lengthAdjust="spacingAndGlyphs">G-code</text>
<text x="19.4" y="464" textLength="24.1" lengthAdjust="spacingAndGlyphs">Mill</text>
<text x="20.7" y="491.5" textLength="23.8" lengthAdjust="spacingAndGlyphs">Log</text>
</g>
<g fill="#8f918c"><rect x="51.4" y="419" width="4" height="26"/><rect x="51.4" y="446.5" width="4" height="26"/><rect x="51.4" y="474" width="4" height="25"/></g>

<path d="M110,494.5 V389.9 H477" stroke="#8a8a88" stroke-width="1.1" fill="none"/>
<path d="M477.1,389.5 V494.6 H109.5" stroke="#2a2a2a" stroke-width="1.1" fill="none"/>
<rect x="110.3" y="469.3" width="357.5" height="12.8" fill="#999500"/>
<rect x="468" y="390.5" width="8.5" height="8" fill="#e6e8e4"/><path d="M468,398.5 H476.5 V390.5" stroke="#9a9a98" stroke-width="0.8" fill="none"/>
<rect x="468" y="485.5" width="8.5" height="8" fill="#e6e8e4"/><path d="M468,493.5 H476.5 V485.5" stroke="#9a9a98" stroke-width="0.8" fill="none"/>
<rect x="468" y="404.9" width="8.5" height="15.6" fill="#e2e4e0"/><path d="M468,420.5 H476.5 V404.9" stroke="#9a9a98" stroke-width="0.8" fill="none"/>







<path d="M470.3,395.8 L472.3,392.8 L474.3,395.8Z M470.3,488 L472.3,491 L474.3,488Z" fill="#333"/>
<text x="111.7" y="400.3" font-size="9.9" font-weight="bold" fill="#1e1e1e" textLength="178.0" lengthAdjust="spacingAndGlyphs" stroke="#1e1e1e" stroke-width="0.28">68: G02 X3.0683 Y-37.0012 I1.7084 J4.677</text>
<text x="111.7" y="413.4" font-size="9.9" font-weight="bold" fill="#1e1e1e" textLength="181.8" lengthAdjust="spacingAndGlyphs" stroke="#1e1e1e" stroke-width="0.28">69: X1.7614 Y-35.7312 I7.2129 J8.73 F1384</text>
<text x="111.7" y="426.4" font-size="9.9" font-weight="bold" fill="#1e1e1e" textLength="202.9" lengthAdjust="spacingAndGlyphs" stroke="#1e1e1e" stroke-width="0.28">70: X1.2401 Y-35.1462 I27.1374 J24.7084 F1537</text>
<text x="111.7" y="439.5" font-size="9.9" font-weight="bold" fill="#1e1e1e" textLength="203.2" lengthAdjust="spacingAndGlyphs" stroke="#1e1e1e" stroke-width="0.28">71: X0.6679 Y-34.4677 I24.5069 J21.2439 F1839</text>
<text x="111.7" y="452.6" font-size="9.9" font-weight="bold" fill="#1e1e1e" textLength="197.6" lengthAdjust="spacingAndGlyphs" stroke="#1e1e1e" stroke-width="0.28">72: X0.3951 Y-34.1273 I11.6778 J9.6413 F2003</text>
<text x="111.7" y="465.6" font-size="9.9" font-weight="bold" fill="#1e1e1e" textLength="177.6" lengthAdjust="spacingAndGlyphs" stroke="#1e1e1e" stroke-width="0.28">73: X-0.2167 Y-33.3189 I28.1155 J21.9145</text>
<text x="111.7" y="478.7" font-size="9.9" font-weight="bold" fill="#fff" textLength="176.5" lengthAdjust="spacingAndGlyphs" stroke="#fff" stroke-width="0.28">74: X-0.6542 Y-32.7046 I18.4104 J13.5741</text>
<text x="111.7" y="491.8" font-size="9.9" font-weight="bold" fill="#1e1e1e" textLength="117.1" lengthAdjust="spacingAndGlyphs" stroke="#1e1e1e" stroke-width="0.28">75: G01 X-0.8335 Y-32.4401</text>
<!-- up/down buttons -->
<g fill="#1a588f">
<path d="M503.9,395.2 L513.4,409.6 H494.4Z M503.9,404.2 L513.4,418.8 H494.4Z"/>
<path d="M503.9,449 L513.4,434.6 H494.4Z M503.9,440 L513.4,425.6 H494.4Z"/>
<path d="M543.6,395.2 L553.1,409.6 H534.1Z M543.6,404.2 L553.1,418.8 H534.1Z"/>
<path d="M543.6,449 L553.1,434.6 H534.1Z M543.6,440 L553.1,425.6 H534.1Z"/>
</g><g stroke="#d5dad5" stroke-width="1" fill="none">
<path d="M495.29999999999995,410.3 L503.9,403.7 L512.5,410.3"/>
<path d="M495.29999999999995,433.9 L503.9,440.5 L512.5,433.9"/>
<path d="M535.0,410.3 L543.6,403.7 L552.2,410.3"/>
<path d="M535.0,433.9 L543.6,440.5 L552.2,433.9"/>
</g>
<g font-weight="bold" fill="#1a588f" font-size="10.6" stroke="#1a588f" stroke-width="0.3">
<text x="545.4" y="398.2" textLength="14.1" lengthAdjust="spacingAndGlyphs">10</text>
<text x="545.4" y="455.3" textLength="14.1" lengthAdjust="spacingAndGlyphs">10</text>
</g>
<!-- status panel -->
<g font-size="9.8" fill="#2a2a2a">
<text x="583.3" y="406.4" textLength="46" lengthAdjust="spacingAndGlyphs">Total Lines</text>
<text x="583.3" y="426.3" textLength="53" lengthAdjust="spacingAndGlyphs">Current Line</text>
<text x="583.3" y="465.5" textLength="57" lengthAdjust="spacingAndGlyphs">Time Elapsed</text>
<text x="583.3" y="485.3" textLength="66" lengthAdjust="spacingAndGlyphs">Time Estimated</text>
</g>
<g font-weight="bold" fill="#1a588f" text-anchor="end" stroke="#1a588f" stroke-width="0.34">
<text x="726.9" y="407.2" font-size="12" textLength="25" lengthAdjust="spacingAndGlyphs">1671</text>
<text x="727.2" y="427.2" font-size="12" textLength="13.5" lengthAdjust="spacingAndGlyphs">73</text>
<text x="727.4" y="466.6" font-size="12.5" textLength="47" lengthAdjust="spacingAndGlyphs">00:00:00</text>
<text x="727.4" y="486.4" font-size="12.5" textLength="47" lengthAdjust="spacingAndGlyphs">00:05:42</text>
</g>
<rect x="583.6" y="432.6" width="143.6" height="12.8" rx="1.5" fill="#fff" stroke="#c8c8c8" stroke-width="0.6"/>
<rect x="584" y="433.2" width="4.5" height="11.6" rx="1" fill="#3d7fc0"/>
<text x="655.3" y="442.3" font-size="9" fill="#222" text-anchor="middle">4%</text>

<!-- transport -->
<g fill="#1a588f">
<rect x="762.5" y="394.5" width="5" height="33"/>
<path d="M767.5,411 L795.5,394.5 V427.5Z"/>
<rect x="850.5" y="394.5" width="5" height="33"/>
<path d="M885,411 L858,394.5 V427.5Z"/>
<path d="M831,437.4 L880.3,464.6 L831,491.8Z"/>
</g>
<path d="M821,405.5 H828 A9.6,9.6 0 0 1 828,424.8 H812.3" stroke="#1a588f" stroke-width="4.9" fill="none"/>
<path d="M808.5,405.4 L823.2,395.5 V414.5Z" fill="#1a588f"/>
<!-- stop sign -->
<polygon points="779.3,439 800.9,439 816.3,454.4 816.3,476 800.9,491.4 779.3,491.4 763.9,476 763.9,454.4" fill="#e42222"/>
<polygon points="779.9,440.6 800.3,440.6 814.7,455 814.7,475.4 800.3,489.8 779.9,489.8 765.5,475.4 765.5,455" fill="none" stroke="#fff" stroke-width="0.9"/>
<polygon points="780.3,441.6 799.9,441.6 813.7,455.4 813.7,475 799.9,488.8 780.3,488.8 766.5,475 766.5,455.4" fill="url(#stopg)"/>
<text x="790.2" y="471.5" font-size="17.5" fill="#fff" text-anchor="middle" textLength="40" lengthAdjust="spacingAndGlyphs" font-weight="bold">STOP</text>

</svg>
</body></html>
